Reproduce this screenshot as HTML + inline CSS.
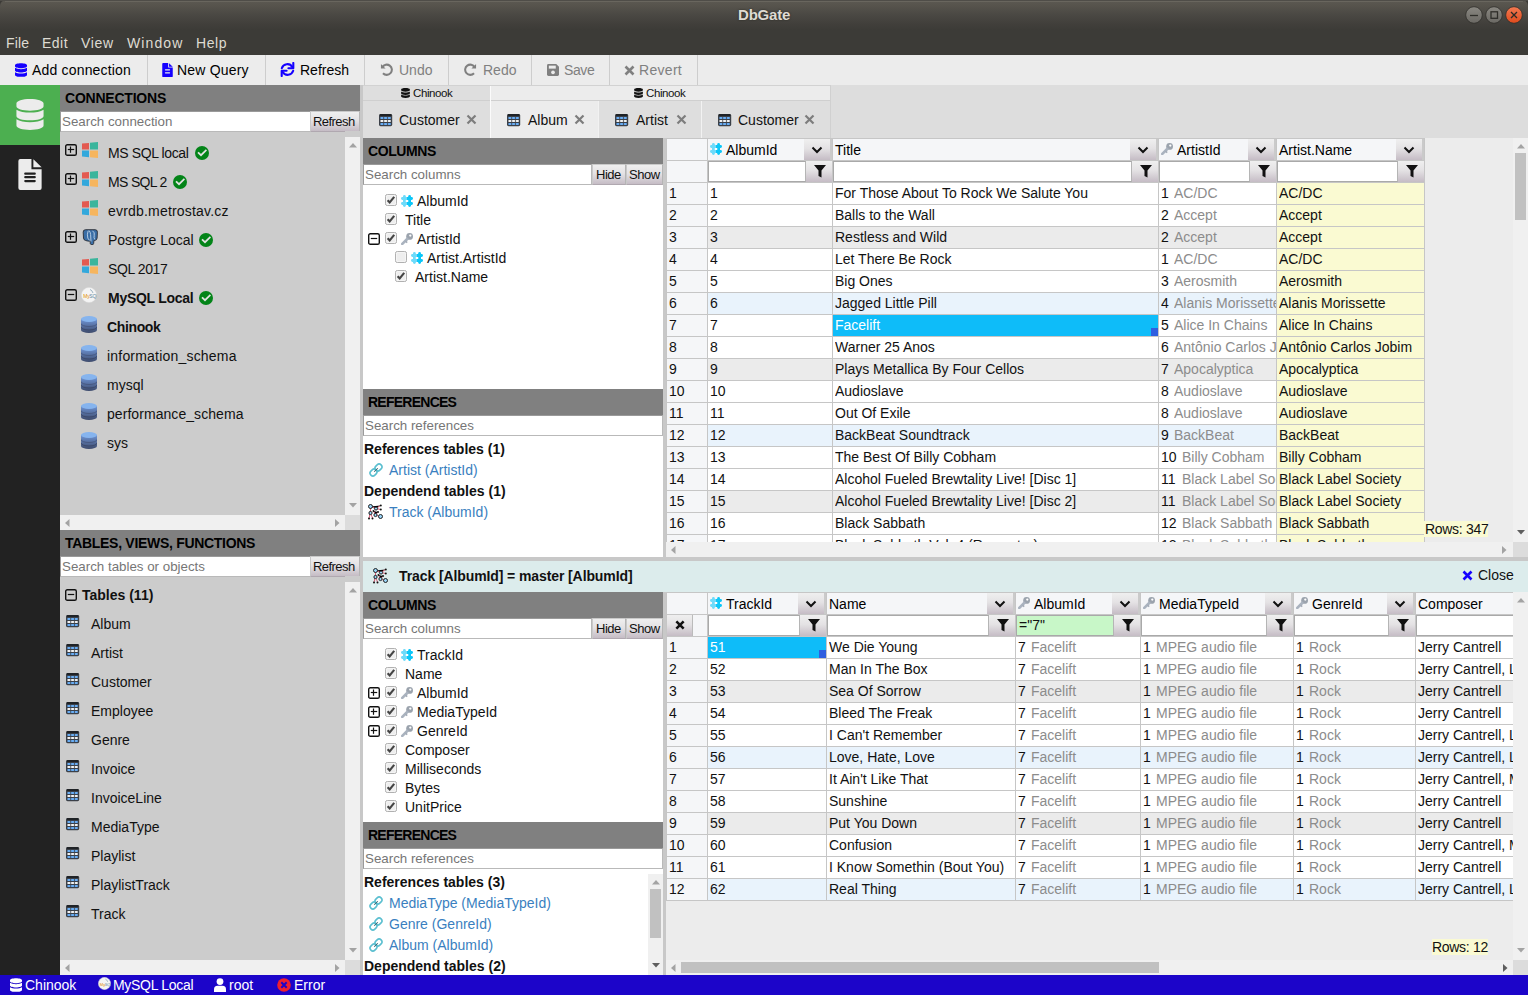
<!DOCTYPE html><html><head><meta charset="utf-8"><title>DbGate</title><style>*{margin:0;padding:0}
html,body{width:1528px;height:995px;overflow:hidden;background:#ececec;font-family:"Liberation Sans", sans-serif;}
.a{position:absolute;white-space:nowrap;}
svg.a{display:block}</style></head><body><div class="a" style="left:0px;top:0px;width:1528px;height:55px;background:#3c3b37;"></div><div class="a" style="left:0px;top:0px;width:1528px;height:31px;background:linear-gradient(#5c5952 0px,#56534c 6px,#4b4944 14px,#413f3b 24px,#3c3b37 30px);border-radius:6px 6px 0 0;"></div><div class="a" style="left:0px;top:0px;width:1528px;height:1px;background:#4f4d48;"></div><div class="a" style="left:5px;top:1px;width:1518px;height:1px;background:#69665e;"></div><div class="a" style="left:738px;top:6px;font-size:15px;line-height:17px;font-weight:bold;color:#dfdbd2;letter-spacing:-0.2px;text-shadow:0 0 2px #26251f;">DbGate</div><svg class="a" style="left:1465px;top:6px;" width="18" height="18" viewBox="0 0 18 18"><defs><linearGradient id="ggmin" x1="0" y1="0" x2="0" y2="1"><stop offset="0" stop-color="#8a8882"/><stop offset="1" stop-color="#6a6863"/></linearGradient></defs><circle cx="9" cy="9" r="8.3" fill="url(#ggmin)" stroke="#302f2b" stroke-width="0.8"/><path d="M5,9.5 H13" stroke="#2f2e2a" stroke-width="1.3"/></svg><svg class="a" style="left:1485px;top:6px;" width="18" height="18" viewBox="0 0 18 18"><defs><linearGradient id="ggmax" x1="0" y1="0" x2="0" y2="1"><stop offset="0" stop-color="#8a8882"/><stop offset="1" stop-color="#6a6863"/></linearGradient></defs><circle cx="9" cy="9" r="8.3" fill="url(#ggmax)" stroke="#302f2b" stroke-width="0.8"/><rect x="6" y="5.8" width="6.5" height="6.5" fill="none" stroke="#2f2e2a" stroke-width="1.3"/></svg><svg class="a" style="left:1505px;top:6px;" width="18" height="18" viewBox="0 0 18 18"><defs><linearGradient id="gc" x1="0" y1="0" x2="0" y2="1"><stop offset="0" stop-color="#f37a52"/><stop offset="1" stop-color="#df4a1c"/></linearGradient></defs><circle cx="9" cy="9" r="8.3" fill="url(#gc)" stroke="#302f2b" stroke-width="0.8"/><path d="M6,6 L12,12 M12,6 L6,12" stroke="#2b2a26" stroke-width="1.3"/></svg><div class="a" style="left:6px;top:35px;font-size:14px;line-height:16px;color:#dfdbd2;letter-spacing:0.2px;">File</div><div class="a" style="left:42px;top:35px;font-size:14px;line-height:16px;color:#dfdbd2;letter-spacing:0.5px;">Edit</div><div class="a" style="left:81px;top:35px;font-size:14px;line-height:16px;color:#dfdbd2;letter-spacing:0.7px;">View</div><div class="a" style="left:127px;top:35px;font-size:14px;line-height:16px;color:#dfdbd2;letter-spacing:1.1px;">Window</div><div class="a" style="left:196px;top:35px;font-size:14px;line-height:16px;color:#dfdbd2;letter-spacing:0.6px;">Help</div><div class="a" style="left:0px;top:55px;width:1528px;height:30px;background:#ececec;"></div><div class="a" style="left:147px;top:55px;width:1px;height:30px;background:#cdcdcd;"></div><div class="a" style="left:265px;top:55px;width:1px;height:30px;background:#cdcdcd;"></div><div class="a" style="left:364px;top:55px;width:1px;height:30px;background:#cdcdcd;"></div><div class="a" style="left:448px;top:55px;width:1px;height:30px;background:#cdcdcd;"></div><div class="a" style="left:531px;top:55px;width:1px;height:30px;background:#cdcdcd;"></div><div class="a" style="left:609px;top:55px;width:1px;height:30px;background:#cdcdcd;"></div><div class="a" style="left:697px;top:55px;width:1px;height:30px;background:#cdcdcd;"></div><svg class="a" style="left:15px;top:63px;overflow:visible" width="12" height="14" viewBox="0 0 448 512"><path fill="#1500ff" d="M448 73.143v45.714C448 159.143 347.667 192 224 192S0 159.143 0 118.857V73.143C0 32.857 100.333 0 224 0s224 32.857 224 73.143zM448 176v102.857C448 319.143 347.667 352 224 352S0 319.143 0 278.857V176c48.125 33.143 136.208 48.572 224 48.572S399.874 209.143 448 176zm0 160v102.857C448 479.143 347.667 512 224 512S0 479.143 0 438.857V336c48.125 33.143 136.208 48.572 224 48.572S399.874 369.143 448 336z"/></svg><div class="a" style="left:32px;top:62px;font-size:14px;line-height:16px;letter-spacing:0.18px;">Add connection</div><svg class="a" style="left:162px;top:63px;" width="11" height="14" viewBox="0 0 24 32"><path fill="#1500ff" d="M2,0 H13.5 V10.5 H24 V30 Q24,32 22,32 H2 Q0,32 0,30 V2 Q0,0 2,0 Z"/><path fill="#1500ff" d="M15.5,0.3 L24,8.5 H15.5 Z"/><rect x="6" y="14.5" width="12" height="2.8" rx="1.1" fill="#ececec"/><rect x="6" y="21" width="12" height="2.8" rx="1.1" fill="#ececec"/></svg><div class="a" style="left:177px;top:62px;font-size:14px;line-height:16px;letter-spacing:0.2px;">New Query</div><svg class="a" style="left:280px;top:62px;" width="15" height="15" viewBox="0 0 15 15"><path d="M1.8,6.2 A5.8,5.8 0 0 1 12.3,5" fill="none" stroke="#1500ff" stroke-width="2.1" stroke-linecap="round"/><path d="M13.3,1 V6.2 H8.4" fill="none" stroke="#1500ff" stroke-width="2.1" stroke-linecap="round" stroke-linejoin="round"/><path d="M13.2,8.8 A5.8,5.8 0 0 1 2.7,10" fill="none" stroke="#1500ff" stroke-width="2.1" stroke-linecap="round"/><path d="M1.7,14 V8.8 H6.6" fill="none" stroke="#1500ff" stroke-width="2.1" stroke-linecap="round" stroke-linejoin="round"/></svg><div class="a" style="left:300px;top:62px;font-size:14px;line-height:16px;">Refresh</div><svg class="a" style="left:380px;top:63px;" width="13" height="13" viewBox="0 0 14 14"><g><path d="M2.5,4.5 A5.5,5.5 0 1 1 3.2,11" fill="none" stroke="#808080" stroke-width="2.2"/><path d="M1,1 V6 H6 Z" fill="#808080"/></g></svg><div class="a" style="left:399px;top:62px;font-size:14px;line-height:16px;color:#808080;">Undo</div><svg class="a" style="left:464px;top:63px;" width="13" height="13" viewBox="0 0 14 14"><g transform="translate(14,0) scale(-1,1)"><path d="M2.5,4.5 A5.5,5.5 0 1 1 3.2,11" fill="none" stroke="#808080" stroke-width="2.2"/><path d="M1,1 V6 H6 Z" fill="#808080"/></g></svg><div class="a" style="left:483px;top:62px;font-size:14px;line-height:16px;color:#808080;">Redo</div><svg class="a" style="left:547px;top:64px;" width="12" height="12" viewBox="0 0 13 13"><path d="M0,1.5 Q0,0 1.5,0 H10 L13,3 V11.5 Q13,13 11.5,13 H1.5 Q0,13 0,11.5 Z" fill="#808080"/><rect x="2" y="1.8" width="7.5" height="3.2" fill="#ececec"/><circle cx="6.5" cy="9" r="2" fill="#ececec"/></svg><div class="a" style="left:564px;top:62px;font-size:14px;line-height:16px;color:#808080;letter-spacing:-0.4px;">Save</div><svg class="a" style="left:624px;top:65px;" width="11" height="11" viewBox="0 0 11 11"><path d="M1.5,1.5 L9.5,9.5 M9.5,1.5 L1.5,9.5" stroke="#808080" stroke-width="2.6" stroke-linecap="butt"/></svg><div class="a" style="left:639px;top:62px;font-size:14px;line-height:16px;color:#808080;letter-spacing:0.3px;">Revert</div><div class="a" style="left:0px;top:85px;width:60px;height:890px;background:#222222;"></div><div class="a" style="left:0px;top:85px;width:60px;height:60px;background:#4caf50;"></div><svg class="a" style="left:16px;top:99px;overflow:visible" width="28" height="31" viewBox="0 0 448 512"><path fill="#ececec" d="M448 73.143v45.714C448 159.143 347.667 192 224 192S0 159.143 0 118.857V73.143C0 32.857 100.333 0 224 0s224 32.857 224 73.143zM448 176v102.857C448 319.143 347.667 352 224 352S0 319.143 0 278.857V176c48.125 33.143 136.208 48.572 224 48.572S399.874 209.143 448 176zm0 160v102.857C448 479.143 347.667 512 224 512S0 479.143 0 438.857V336c48.125 33.143 136.208 48.572 224 48.572S399.874 369.143 448 336z"/></svg><svg class="a" style="left:18px;top:159px;" width="24" height="31" viewBox="0 0 24 32"><path fill="#ececec" d="M2,0 H13.5 V10.5 H24 V30 Q24,32 22,32 H2 Q0,32 0,30 V2 Q0,0 2,0 Z"/><path fill="#ececec" d="M15.5,0.3 L24,8.5 H15.5 Z"/><rect x="6" y="13.9" width="12" height="2.3" rx="1.1" fill="#222222"/><rect x="6" y="17.6" width="12" height="2.3" rx="1.1" fill="#222222"/><rect x="6" y="21.6" width="12" height="2.3" rx="1.1" fill="#222222"/></svg><div class="a" style="left:60px;top:85px;width:300px;height:890px;background:#cccccc;"></div><div class="a" style="left:60px;top:85px;width:300px;height:26px;background:#808080;"></div><div class="a" style="left:65px;top:90px;font-size:14px;line-height:16px;font-weight:bold;color:#000;letter-spacing:-0.22px;">CONNECTIONS</div><div class="a" style="left:60px;top:111px;width:251px;height:21px;background:#fff;box-sizing:border-box;border:1px solid #b9b9b9;border-top-color:#9a9a9a;border-left-color:#9a9a9a;"></div><div class="a" style="left:62px;top:114px;font-size:13.333px;line-height:15px;color:#767676;">Search connection</div><div class="a" style="left:310px;top:111px;width:50px;height:21px;background:linear-gradient(#efefef,#e4e2e4 45%,#c5bcc5);box-sizing:border-box;border:1px solid #c9c9c9;border-right-color:#b5b5b5;border-bottom-color:#b0a8b0;"></div><div class="a" style="left:313px;top:114px;font-size:13px;line-height:15px;color:#111;letter-spacing:-0.55px;">Refresh</div><div class="a" style="left:345px;top:131px;width:15px;height:6px;background:#cccccc;"></div><div class="a" style="left:345px;top:137px;width:15px;height:378px;background:#f0f0f0;"></div><svg class="a" style="left:348.5px;top:143px;" width="8" height="5" viewBox="0 0 8 5"><path d="M0,4.5 L4,0 L8,4.5 Z" fill="#a3a3a3"/></svg><svg class="a" style="left:348.5px;top:503px;" width="8" height="5" viewBox="0 0 8 5"><path d="M0,0 L8,0 L4,4.5 Z" fill="#a3a3a3"/></svg><div class="a" style="left:60px;top:515px;width:285px;height:15px;background:#f0f0f0;"></div><svg class="a" style="left:65px;top:518.5px;" width="5" height="8" viewBox="0 0 5 8"><path d="M4.5,0 V8 L0,4 Z" fill="#a3a3a3"/></svg><svg class="a" style="left:335px;top:518.5px;" width="5" height="8" viewBox="0 0 5 8"><path d="M0,0 V8 L4.5,4 Z" fill="#a3a3a3"/></svg><div class="a" style="left:345px;top:515px;width:15px;height:15px;background:#dcdcdc;"></div><svg class="a" style="left:65px;top:144px;" width="12" height="12" viewBox="0 0 12 12"><rect x="0.7" y="0.7" width="10.6" height="10.6" rx="1.6" fill="none" stroke="#111" stroke-width="1.4"/><path d="M2.8,5.5 H9.2" stroke="#111" stroke-width="1.2"/><path d="M5.5,2.5 V8.8" stroke="#111" stroke-width="1.2"/></svg><svg class="a" style="left:82px;top:142px;" width="16" height="16" viewBox="0 0 16 16"><path d="M0,1.6 L7,0.9 V7.6 H0 Z" fill="#e35a51"/><path d="M8,0.8 L16,0 V7.6 H8 Z" fill="#3ab59c"/><path d="M0,8.6 H7 V15.2 L0,14.5 Z" fill="#33a8dc"/><path d="M8,8.6 H16 V16 L8,15.3 Z" fill="#f6b55e"/></svg><div class="a" style="left:108px;top:145px;font-size:14px;line-height:16px;color:#111;letter-spacing:-0.38px;">MS SQL local</div><svg class="a" style="left:65px;top:173px;" width="12" height="12" viewBox="0 0 12 12"><rect x="0.7" y="0.7" width="10.6" height="10.6" rx="1.6" fill="none" stroke="#111" stroke-width="1.4"/><path d="M2.8,5.5 H9.2" stroke="#111" stroke-width="1.2"/><path d="M5.5,2.5 V8.8" stroke="#111" stroke-width="1.2"/></svg><svg class="a" style="left:82px;top:171px;" width="16" height="16" viewBox="0 0 16 16"><path d="M0,1.6 L7,0.9 V7.6 H0 Z" fill="#e35a51"/><path d="M8,0.8 L16,0 V7.6 H8 Z" fill="#3ab59c"/><path d="M0,8.6 H7 V15.2 L0,14.5 Z" fill="#33a8dc"/><path d="M8,8.6 H16 V16 L8,15.3 Z" fill="#f6b55e"/></svg><div class="a" style="left:108px;top:174px;font-size:14px;line-height:16px;color:#111;letter-spacing:-0.67px;">MS SQL 2</div><svg class="a" style="left:82px;top:200px;" width="16" height="16" viewBox="0 0 16 16"><path d="M0,1.6 L7,0.9 V7.6 H0 Z" fill="#e35a51"/><path d="M8,0.8 L16,0 V7.6 H8 Z" fill="#3ab59c"/><path d="M0,8.6 H7 V15.2 L0,14.5 Z" fill="#33a8dc"/><path d="M8,8.6 H16 V16 L8,15.3 Z" fill="#f6b55e"/></svg><div class="a" style="left:108px;top:203px;font-size:14px;line-height:16px;color:#111;letter-spacing:0.19px;">evrdb.metrostav.cz</div><svg class="a" style="left:65px;top:231px;" width="12" height="12" viewBox="0 0 12 12"><rect x="0.7" y="0.7" width="10.6" height="10.6" rx="1.6" fill="none" stroke="#111" stroke-width="1.4"/><path d="M2.8,5.5 H9.2" stroke="#111" stroke-width="1.2"/><path d="M5.5,2.5 V8.8" stroke="#111" stroke-width="1.2"/></svg><svg class="a" style="left:82px;top:228.5px;" width="16" height="16" viewBox="0 0 16 16"><path d="M1.2,3.2 Q1,0.8 3.5,0.7 H13.2 Q15.6,0.8 15.4,3.2 L15.1,9 Q15,11.2 12.8,11.4 L12,11.4 L11.6,14.6 Q11.3,16 10,15.8 L9,15.6 Q8.1,15.2 8.2,13.8 L8.3,12 Q6.8,12.3 5.2,11.9 L3.6,11.5 Q1.6,11 1.5,9 Z" fill="#3a6ea6" stroke="#2a2d33" stroke-width="0.9"/><path d="M6.2,1.8 Q4.8,5 5.8,9 Q6.5,11 7.8,11.2 M7,1.5 Q8.4,3 8.6,5.5 L9,12.5 M10.5,1.8 Q13,3.5 12.2,6.5 Q11.6,8.8 12.8,10.5" fill="none" stroke="#cfe0f0" stroke-width="0.8"/></svg><div class="a" style="left:108px;top:232px;font-size:14px;line-height:16px;color:#111;letter-spacing:0px;">Postgre Local</div><svg class="a" style="left:82px;top:258px;" width="16" height="16" viewBox="0 0 16 16"><path d="M0,1.6 L7,0.9 V7.6 H0 Z" fill="#e35a51"/><path d="M8,0.8 L16,0 V7.6 H8 Z" fill="#3ab59c"/><path d="M0,8.6 H7 V15.2 L0,14.5 Z" fill="#33a8dc"/><path d="M8,8.6 H16 V16 L8,15.3 Z" fill="#f6b55e"/></svg><div class="a" style="left:108px;top:261px;font-size:14px;line-height:16px;color:#111;letter-spacing:-0.39px;">SQL 2017</div><svg class="a" style="left:65px;top:289px;" width="12" height="12" viewBox="0 0 12 12"><rect x="0.7" y="0.7" width="10.6" height="10.6" rx="1.6" fill="none" stroke="#111" stroke-width="1.4"/><path d="M2.8,5.5 H9.2" stroke="#111" stroke-width="1.2"/></svg><svg class="a" style="left:81px;top:287px;" width="16" height="16" viewBox="0 0 16 16"><circle cx="8" cy="8" r="7.6" fill="#f4f4f4" stroke="#ddd" stroke-width="0.5"/><text x="2.2" y="10.5" font-size="5" font-family="Liberation Sans" fill="#e48e00">My</text><text x="8.2" y="10.5" font-size="5" font-family="Liberation Sans" fill="#5d87a1">SQL</text><path d="M9,2.5 Q11,3 12,6" stroke="#5d87a1" stroke-width="0.6" fill="none"/></svg><div class="a" style="left:108px;top:290px;font-size:14px;line-height:16px;font-weight:bold;color:#111;letter-spacing:-0.28px;">MySQL Local</div><svg class="a" style="left:195px;top:146px;" width="14" height="14" viewBox="0 0 14 14"><circle cx="7" cy="7" r="7" fill="#038418"/><path d="M3.6,6.9 L6,9.2 L10.8,4.5" fill="none" stroke="#e2e2e2" stroke-width="1.7" stroke-linecap="square"/></svg><svg class="a" style="left:173px;top:175px;" width="14" height="14" viewBox="0 0 14 14"><circle cx="7" cy="7" r="7" fill="#038418"/><path d="M3.6,6.9 L6,9.2 L10.8,4.5" fill="none" stroke="#e2e2e2" stroke-width="1.7" stroke-linecap="square"/></svg><svg class="a" style="left:199px;top:233px;" width="14" height="14" viewBox="0 0 14 14"><circle cx="7" cy="7" r="7" fill="#038418"/><path d="M3.6,6.9 L6,9.2 L10.8,4.5" fill="none" stroke="#e2e2e2" stroke-width="1.7" stroke-linecap="square"/></svg><svg class="a" style="left:199px;top:291px;" width="14" height="14" viewBox="0 0 14 14"><circle cx="7" cy="7" r="7" fill="#038418"/><path d="M3.6,6.9 L6,9.2 L10.8,4.5" fill="none" stroke="#e2e2e2" stroke-width="1.7" stroke-linecap="square"/></svg><svg class="a" style="left:81px;top:316px;" width="16" height="17" viewBox="0 0 16 17"><defs><linearGradient id="cg" x1="0" y1="0" x2="0" y2="1"><stop offset="0" stop-color="#6f95d6"/><stop offset="1" stop-color="#3d4a6b"/></linearGradient></defs><path d="M0,3 V14 A8,3 0 0 0 16,14 V3 Z" fill="url(#cg)"/><path d="M0,7.5 A8,3 0 0 0 16,7.5" fill="none" stroke="#3f4d70" stroke-width="0.9" opacity="0.7"/><path d="M0,11 A8,3 0 0 0 16,11" fill="none" stroke="#333d59" stroke-width="0.9" opacity="0.7"/><ellipse cx="8" cy="3" rx="8" ry="3" fill="#86b4ee"/></svg><div class="a" style="left:107px;top:319px;font-size:14px;line-height:16px;font-weight:bold;color:#111;letter-spacing:-0.36px;">Chinook</div><svg class="a" style="left:81px;top:345px;" width="16" height="17" viewBox="0 0 16 17"><defs><linearGradient id="cg" x1="0" y1="0" x2="0" y2="1"><stop offset="0" stop-color="#6f95d6"/><stop offset="1" stop-color="#3d4a6b"/></linearGradient></defs><path d="M0,3 V14 A8,3 0 0 0 16,14 V3 Z" fill="url(#cg)"/><path d="M0,7.5 A8,3 0 0 0 16,7.5" fill="none" stroke="#3f4d70" stroke-width="0.9" opacity="0.7"/><path d="M0,11 A8,3 0 0 0 16,11" fill="none" stroke="#333d59" stroke-width="0.9" opacity="0.7"/><ellipse cx="8" cy="3" rx="8" ry="3" fill="#86b4ee"/></svg><div class="a" style="left:107px;top:348px;font-size:14px;line-height:16px;color:#111;letter-spacing:0.2px;">information_schema</div><svg class="a" style="left:81px;top:374px;" width="16" height="17" viewBox="0 0 16 17"><defs><linearGradient id="cg" x1="0" y1="0" x2="0" y2="1"><stop offset="0" stop-color="#6f95d6"/><stop offset="1" stop-color="#3d4a6b"/></linearGradient></defs><path d="M0,3 V14 A8,3 0 0 0 16,14 V3 Z" fill="url(#cg)"/><path d="M0,7.5 A8,3 0 0 0 16,7.5" fill="none" stroke="#3f4d70" stroke-width="0.9" opacity="0.7"/><path d="M0,11 A8,3 0 0 0 16,11" fill="none" stroke="#333d59" stroke-width="0.9" opacity="0.7"/><ellipse cx="8" cy="3" rx="8" ry="3" fill="#86b4ee"/></svg><div class="a" style="left:107px;top:377px;font-size:14px;line-height:16px;color:#111;letter-spacing:0px;">mysql</div><svg class="a" style="left:81px;top:403px;" width="16" height="17" viewBox="0 0 16 17"><defs><linearGradient id="cg" x1="0" y1="0" x2="0" y2="1"><stop offset="0" stop-color="#6f95d6"/><stop offset="1" stop-color="#3d4a6b"/></linearGradient></defs><path d="M0,3 V14 A8,3 0 0 0 16,14 V3 Z" fill="url(#cg)"/><path d="M0,7.5 A8,3 0 0 0 16,7.5" fill="none" stroke="#3f4d70" stroke-width="0.9" opacity="0.7"/><path d="M0,11 A8,3 0 0 0 16,11" fill="none" stroke="#333d59" stroke-width="0.9" opacity="0.7"/><ellipse cx="8" cy="3" rx="8" ry="3" fill="#86b4ee"/></svg><div class="a" style="left:107px;top:406px;font-size:14px;line-height:16px;color:#111;letter-spacing:0.06px;">performance_schema</div><svg class="a" style="left:81px;top:432px;" width="16" height="17" viewBox="0 0 16 17"><defs><linearGradient id="cg" x1="0" y1="0" x2="0" y2="1"><stop offset="0" stop-color="#6f95d6"/><stop offset="1" stop-color="#3d4a6b"/></linearGradient></defs><path d="M0,3 V14 A8,3 0 0 0 16,14 V3 Z" fill="url(#cg)"/><path d="M0,7.5 A8,3 0 0 0 16,7.5" fill="none" stroke="#3f4d70" stroke-width="0.9" opacity="0.7"/><path d="M0,11 A8,3 0 0 0 16,11" fill="none" stroke="#333d59" stroke-width="0.9" opacity="0.7"/><ellipse cx="8" cy="3" rx="8" ry="3" fill="#86b4ee"/></svg><div class="a" style="left:107px;top:435px;font-size:14px;line-height:16px;color:#111;letter-spacing:0px;">sys</div><div class="a" style="left:60px;top:530px;width:300px;height:26px;background:#808080;"></div><div class="a" style="left:65px;top:535px;font-size:14px;line-height:16px;font-weight:bold;color:#000;letter-spacing:-0.3px;">TABLES, VIEWS, FUNCTIONS</div><div class="a" style="left:60px;top:556px;width:251px;height:21px;background:#fff;box-sizing:border-box;border:1px solid #b9b9b9;border-top-color:#9a9a9a;border-left-color:#9a9a9a;"></div><div class="a" style="left:62px;top:559px;font-size:13.333px;line-height:15px;color:#767676;">Search tables or objects</div><div class="a" style="left:310px;top:556px;width:50px;height:21px;background:linear-gradient(#efefef,#e4e2e4 45%,#c5bcc5);box-sizing:border-box;border:1px solid #c9c9c9;border-right-color:#b5b5b5;border-bottom-color:#b0a8b0;"></div><div class="a" style="left:313px;top:559px;font-size:13px;line-height:15px;color:#111;letter-spacing:-0.55px;">Refresh</div><div class="a" style="left:345px;top:582px;width:15px;height:378px;background:#f0f0f0;"></div><svg class="a" style="left:348.5px;top:588px;" width="8" height="5" viewBox="0 0 8 5"><path d="M0,4.5 L4,0 L8,4.5 Z" fill="#a3a3a3"/></svg><svg class="a" style="left:348.5px;top:948px;" width="8" height="5" viewBox="0 0 8 5"><path d="M0,0 L8,0 L4,4.5 Z" fill="#a3a3a3"/></svg><div class="a" style="left:345px;top:576px;width:15px;height:6px;background:#cccccc;"></div><div class="a" style="left:60px;top:960px;width:285px;height:15px;background:#f0f0f0;"></div><svg class="a" style="left:65px;top:963.5px;" width="5" height="8" viewBox="0 0 5 8"><path d="M4.5,0 V8 L0,4 Z" fill="#a3a3a3"/></svg><svg class="a" style="left:335px;top:963.5px;" width="5" height="8" viewBox="0 0 5 8"><path d="M0,0 V8 L4.5,4 Z" fill="#a3a3a3"/></svg><div class="a" style="left:345px;top:960px;width:15px;height:15px;background:#dcdcdc;"></div><svg class="a" style="left:65px;top:589px;" width="12" height="12" viewBox="0 0 12 12"><rect x="0.7" y="0.7" width="10.6" height="10.6" rx="1.6" fill="none" stroke="#111" stroke-width="1.4"/><path d="M2.8,5.5 H9.2" stroke="#111" stroke-width="1.2"/></svg><div class="a" style="left:82px;top:587px;font-size:14px;line-height:16px;font-weight:bold;color:#111;">Tables (11)</div><svg class="a" style="left:66px;top:615px;" width="14" height="13" viewBox="0 0 14 13"><rect x="0" y="0" width="13.2" height="12.2" rx="1.6" fill="#3b4048"/><rect x="0.6" y="0" width="12" height="2" rx="1" fill="#1f2226"/><rect x="1.3" y="3.0" width="3.2" height="2.1" rx="0.8" fill="#69aef6"/><rect x="5.0" y="3.0" width="3.2" height="2.1" rx="0.8" fill="#69aef6"/><rect x="8.7" y="3.0" width="3.2" height="2.1" rx="0.8" fill="#69aef6"/><rect x="1.3" y="6.0" width="3.2" height="2.1" rx="0.8" fill="#f2f2f2"/><rect x="5.0" y="6.0" width="3.2" height="2.1" rx="0.8" fill="#f2f2f2"/><rect x="8.7" y="6.0" width="3.2" height="2.1" rx="0.8" fill="#f2f2f2"/><rect x="1.3" y="9.0" width="3.2" height="2.1" rx="0.8" fill="#69aef6"/><rect x="5.0" y="9.0" width="3.2" height="2.1" rx="0.8" fill="#69aef6"/><rect x="8.7" y="9.0" width="3.2" height="2.1" rx="0.8" fill="#69aef6"/></svg><div class="a" style="left:91px;top:616px;font-size:14px;line-height:16px;color:#111;">Album</div><svg class="a" style="left:66px;top:644px;" width="14" height="13" viewBox="0 0 14 13"><rect x="0" y="0" width="13.2" height="12.2" rx="1.6" fill="#3b4048"/><rect x="0.6" y="0" width="12" height="2" rx="1" fill="#1f2226"/><rect x="1.3" y="3.0" width="3.2" height="2.1" rx="0.8" fill="#69aef6"/><rect x="5.0" y="3.0" width="3.2" height="2.1" rx="0.8" fill="#69aef6"/><rect x="8.7" y="3.0" width="3.2" height="2.1" rx="0.8" fill="#69aef6"/><rect x="1.3" y="6.0" width="3.2" height="2.1" rx="0.8" fill="#f2f2f2"/><rect x="5.0" y="6.0" width="3.2" height="2.1" rx="0.8" fill="#f2f2f2"/><rect x="8.7" y="6.0" width="3.2" height="2.1" rx="0.8" fill="#f2f2f2"/><rect x="1.3" y="9.0" width="3.2" height="2.1" rx="0.8" fill="#69aef6"/><rect x="5.0" y="9.0" width="3.2" height="2.1" rx="0.8" fill="#69aef6"/><rect x="8.7" y="9.0" width="3.2" height="2.1" rx="0.8" fill="#69aef6"/></svg><div class="a" style="left:91px;top:645px;font-size:14px;line-height:16px;color:#111;">Artist</div><svg class="a" style="left:66px;top:673px;" width="14" height="13" viewBox="0 0 14 13"><rect x="0" y="0" width="13.2" height="12.2" rx="1.6" fill="#3b4048"/><rect x="0.6" y="0" width="12" height="2" rx="1" fill="#1f2226"/><rect x="1.3" y="3.0" width="3.2" height="2.1" rx="0.8" fill="#69aef6"/><rect x="5.0" y="3.0" width="3.2" height="2.1" rx="0.8" fill="#69aef6"/><rect x="8.7" y="3.0" width="3.2" height="2.1" rx="0.8" fill="#69aef6"/><rect x="1.3" y="6.0" width="3.2" height="2.1" rx="0.8" fill="#f2f2f2"/><rect x="5.0" y="6.0" width="3.2" height="2.1" rx="0.8" fill="#f2f2f2"/><rect x="8.7" y="6.0" width="3.2" height="2.1" rx="0.8" fill="#f2f2f2"/><rect x="1.3" y="9.0" width="3.2" height="2.1" rx="0.8" fill="#69aef6"/><rect x="5.0" y="9.0" width="3.2" height="2.1" rx="0.8" fill="#69aef6"/><rect x="8.7" y="9.0" width="3.2" height="2.1" rx="0.8" fill="#69aef6"/></svg><div class="a" style="left:91px;top:674px;font-size:14px;line-height:16px;color:#111;">Customer</div><svg class="a" style="left:66px;top:702px;" width="14" height="13" viewBox="0 0 14 13"><rect x="0" y="0" width="13.2" height="12.2" rx="1.6" fill="#3b4048"/><rect x="0.6" y="0" width="12" height="2" rx="1" fill="#1f2226"/><rect x="1.3" y="3.0" width="3.2" height="2.1" rx="0.8" fill="#69aef6"/><rect x="5.0" y="3.0" width="3.2" height="2.1" rx="0.8" fill="#69aef6"/><rect x="8.7" y="3.0" width="3.2" height="2.1" rx="0.8" fill="#69aef6"/><rect x="1.3" y="6.0" width="3.2" height="2.1" rx="0.8" fill="#f2f2f2"/><rect x="5.0" y="6.0" width="3.2" height="2.1" rx="0.8" fill="#f2f2f2"/><rect x="8.7" y="6.0" width="3.2" height="2.1" rx="0.8" fill="#f2f2f2"/><rect x="1.3" y="9.0" width="3.2" height="2.1" rx="0.8" fill="#69aef6"/><rect x="5.0" y="9.0" width="3.2" height="2.1" rx="0.8" fill="#69aef6"/><rect x="8.7" y="9.0" width="3.2" height="2.1" rx="0.8" fill="#69aef6"/></svg><div class="a" style="left:91px;top:703px;font-size:14px;line-height:16px;color:#111;">Employee</div><svg class="a" style="left:66px;top:731px;" width="14" height="13" viewBox="0 0 14 13"><rect x="0" y="0" width="13.2" height="12.2" rx="1.6" fill="#3b4048"/><rect x="0.6" y="0" width="12" height="2" rx="1" fill="#1f2226"/><rect x="1.3" y="3.0" width="3.2" height="2.1" rx="0.8" fill="#69aef6"/><rect x="5.0" y="3.0" width="3.2" height="2.1" rx="0.8" fill="#69aef6"/><rect x="8.7" y="3.0" width="3.2" height="2.1" rx="0.8" fill="#69aef6"/><rect x="1.3" y="6.0" width="3.2" height="2.1" rx="0.8" fill="#f2f2f2"/><rect x="5.0" y="6.0" width="3.2" height="2.1" rx="0.8" fill="#f2f2f2"/><rect x="8.7" y="6.0" width="3.2" height="2.1" rx="0.8" fill="#f2f2f2"/><rect x="1.3" y="9.0" width="3.2" height="2.1" rx="0.8" fill="#69aef6"/><rect x="5.0" y="9.0" width="3.2" height="2.1" rx="0.8" fill="#69aef6"/><rect x="8.7" y="9.0" width="3.2" height="2.1" rx="0.8" fill="#69aef6"/></svg><div class="a" style="left:91px;top:732px;font-size:14px;line-height:16px;color:#111;">Genre</div><svg class="a" style="left:66px;top:760px;" width="14" height="13" viewBox="0 0 14 13"><rect x="0" y="0" width="13.2" height="12.2" rx="1.6" fill="#3b4048"/><rect x="0.6" y="0" width="12" height="2" rx="1" fill="#1f2226"/><rect x="1.3" y="3.0" width="3.2" height="2.1" rx="0.8" fill="#69aef6"/><rect x="5.0" y="3.0" width="3.2" height="2.1" rx="0.8" fill="#69aef6"/><rect x="8.7" y="3.0" width="3.2" height="2.1" rx="0.8" fill="#69aef6"/><rect x="1.3" y="6.0" width="3.2" height="2.1" rx="0.8" fill="#f2f2f2"/><rect x="5.0" y="6.0" width="3.2" height="2.1" rx="0.8" fill="#f2f2f2"/><rect x="8.7" y="6.0" width="3.2" height="2.1" rx="0.8" fill="#f2f2f2"/><rect x="1.3" y="9.0" width="3.2" height="2.1" rx="0.8" fill="#69aef6"/><rect x="5.0" y="9.0" width="3.2" height="2.1" rx="0.8" fill="#69aef6"/><rect x="8.7" y="9.0" width="3.2" height="2.1" rx="0.8" fill="#69aef6"/></svg><div class="a" style="left:91px;top:761px;font-size:14px;line-height:16px;color:#111;">Invoice</div><svg class="a" style="left:66px;top:789px;" width="14" height="13" viewBox="0 0 14 13"><rect x="0" y="0" width="13.2" height="12.2" rx="1.6" fill="#3b4048"/><rect x="0.6" y="0" width="12" height="2" rx="1" fill="#1f2226"/><rect x="1.3" y="3.0" width="3.2" height="2.1" rx="0.8" fill="#69aef6"/><rect x="5.0" y="3.0" width="3.2" height="2.1" rx="0.8" fill="#69aef6"/><rect x="8.7" y="3.0" width="3.2" height="2.1" rx="0.8" fill="#69aef6"/><rect x="1.3" y="6.0" width="3.2" height="2.1" rx="0.8" fill="#f2f2f2"/><rect x="5.0" y="6.0" width="3.2" height="2.1" rx="0.8" fill="#f2f2f2"/><rect x="8.7" y="6.0" width="3.2" height="2.1" rx="0.8" fill="#f2f2f2"/><rect x="1.3" y="9.0" width="3.2" height="2.1" rx="0.8" fill="#69aef6"/><rect x="5.0" y="9.0" width="3.2" height="2.1" rx="0.8" fill="#69aef6"/><rect x="8.7" y="9.0" width="3.2" height="2.1" rx="0.8" fill="#69aef6"/></svg><div class="a" style="left:91px;top:790px;font-size:14px;line-height:16px;color:#111;">InvoiceLine</div><svg class="a" style="left:66px;top:818px;" width="14" height="13" viewBox="0 0 14 13"><rect x="0" y="0" width="13.2" height="12.2" rx="1.6" fill="#3b4048"/><rect x="0.6" y="0" width="12" height="2" rx="1" fill="#1f2226"/><rect x="1.3" y="3.0" width="3.2" height="2.1" rx="0.8" fill="#69aef6"/><rect x="5.0" y="3.0" width="3.2" height="2.1" rx="0.8" fill="#69aef6"/><rect x="8.7" y="3.0" width="3.2" height="2.1" rx="0.8" fill="#69aef6"/><rect x="1.3" y="6.0" width="3.2" height="2.1" rx="0.8" fill="#f2f2f2"/><rect x="5.0" y="6.0" width="3.2" height="2.1" rx="0.8" fill="#f2f2f2"/><rect x="8.7" y="6.0" width="3.2" height="2.1" rx="0.8" fill="#f2f2f2"/><rect x="1.3" y="9.0" width="3.2" height="2.1" rx="0.8" fill="#69aef6"/><rect x="5.0" y="9.0" width="3.2" height="2.1" rx="0.8" fill="#69aef6"/><rect x="8.7" y="9.0" width="3.2" height="2.1" rx="0.8" fill="#69aef6"/></svg><div class="a" style="left:91px;top:819px;font-size:14px;line-height:16px;color:#111;">MediaType</div><svg class="a" style="left:66px;top:847px;" width="14" height="13" viewBox="0 0 14 13"><rect x="0" y="0" width="13.2" height="12.2" rx="1.6" fill="#3b4048"/><rect x="0.6" y="0" width="12" height="2" rx="1" fill="#1f2226"/><rect x="1.3" y="3.0" width="3.2" height="2.1" rx="0.8" fill="#69aef6"/><rect x="5.0" y="3.0" width="3.2" height="2.1" rx="0.8" fill="#69aef6"/><rect x="8.7" y="3.0" width="3.2" height="2.1" rx="0.8" fill="#69aef6"/><rect x="1.3" y="6.0" width="3.2" height="2.1" rx="0.8" fill="#f2f2f2"/><rect x="5.0" y="6.0" width="3.2" height="2.1" rx="0.8" fill="#f2f2f2"/><rect x="8.7" y="6.0" width="3.2" height="2.1" rx="0.8" fill="#f2f2f2"/><rect x="1.3" y="9.0" width="3.2" height="2.1" rx="0.8" fill="#69aef6"/><rect x="5.0" y="9.0" width="3.2" height="2.1" rx="0.8" fill="#69aef6"/><rect x="8.7" y="9.0" width="3.2" height="2.1" rx="0.8" fill="#69aef6"/></svg><div class="a" style="left:91px;top:848px;font-size:14px;line-height:16px;color:#111;">Playlist</div><svg class="a" style="left:66px;top:876px;" width="14" height="13" viewBox="0 0 14 13"><rect x="0" y="0" width="13.2" height="12.2" rx="1.6" fill="#3b4048"/><rect x="0.6" y="0" width="12" height="2" rx="1" fill="#1f2226"/><rect x="1.3" y="3.0" width="3.2" height="2.1" rx="0.8" fill="#69aef6"/><rect x="5.0" y="3.0" width="3.2" height="2.1" rx="0.8" fill="#69aef6"/><rect x="8.7" y="3.0" width="3.2" height="2.1" rx="0.8" fill="#69aef6"/><rect x="1.3" y="6.0" width="3.2" height="2.1" rx="0.8" fill="#f2f2f2"/><rect x="5.0" y="6.0" width="3.2" height="2.1" rx="0.8" fill="#f2f2f2"/><rect x="8.7" y="6.0" width="3.2" height="2.1" rx="0.8" fill="#f2f2f2"/><rect x="1.3" y="9.0" width="3.2" height="2.1" rx="0.8" fill="#69aef6"/><rect x="5.0" y="9.0" width="3.2" height="2.1" rx="0.8" fill="#69aef6"/><rect x="8.7" y="9.0" width="3.2" height="2.1" rx="0.8" fill="#69aef6"/></svg><div class="a" style="left:91px;top:877px;font-size:14px;line-height:16px;color:#111;">PlaylistTrack</div><svg class="a" style="left:66px;top:905px;" width="14" height="13" viewBox="0 0 14 13"><rect x="0" y="0" width="13.2" height="12.2" rx="1.6" fill="#3b4048"/><rect x="0.6" y="0" width="12" height="2" rx="1" fill="#1f2226"/><rect x="1.3" y="3.0" width="3.2" height="2.1" rx="0.8" fill="#69aef6"/><rect x="5.0" y="3.0" width="3.2" height="2.1" rx="0.8" fill="#69aef6"/><rect x="8.7" y="3.0" width="3.2" height="2.1" rx="0.8" fill="#69aef6"/><rect x="1.3" y="6.0" width="3.2" height="2.1" rx="0.8" fill="#f2f2f2"/><rect x="5.0" y="6.0" width="3.2" height="2.1" rx="0.8" fill="#f2f2f2"/><rect x="8.7" y="6.0" width="3.2" height="2.1" rx="0.8" fill="#f2f2f2"/><rect x="1.3" y="9.0" width="3.2" height="2.1" rx="0.8" fill="#69aef6"/><rect x="5.0" y="9.0" width="3.2" height="2.1" rx="0.8" fill="#69aef6"/><rect x="8.7" y="9.0" width="3.2" height="2.1" rx="0.8" fill="#69aef6"/></svg><div class="a" style="left:91px;top:906px;font-size:14px;line-height:16px;color:#111;">Track</div><div class="a" style="left:360px;top:85px;width:3px;height:890px;background:#c8c8c8;"></div><div class="a" style="left:0px;top:975px;width:1528px;height:20px;background:#1c05c9;"></div><svg class="a" style="left:10px;top:978px;overflow:visible" width="12" height="14" viewBox="0 0 448 512"><path fill="#ffffff" d="M448 73.143v45.714C448 159.143 347.667 192 224 192S0 159.143 0 118.857V73.143C0 32.857 100.333 0 224 0s224 32.857 224 73.143zM448 176v102.857C448 319.143 347.667 352 224 352S0 319.143 0 278.857V176c48.125 33.143 136.208 48.572 224 48.572S399.874 209.143 448 176zm0 160v102.857C448 479.143 347.667 512 224 512S0 479.143 0 438.857V336c48.125 33.143 136.208 48.572 224 48.572S399.874 369.143 448 336z"/></svg><div class="a" style="left:25px;top:977px;font-size:14px;line-height:16px;color:#fff;">Chinook</div><svg class="a" style="left:98px;top:977px;" width="13" height="13" viewBox="0 0 16 16"><circle cx="8" cy="8" r="7.6" fill="#f4f4f4" stroke="#ddd" stroke-width="0.5"/><text x="2.2" y="10.5" font-size="5" font-family="Liberation Sans" fill="#e48e00">My</text><text x="8.2" y="10.5" font-size="5" font-family="Liberation Sans" fill="#5d87a1">SQL</text><path d="M9,2.5 Q11,3 12,6" stroke="#5d87a1" stroke-width="0.6" fill="none"/></svg><div class="a" style="left:113px;top:977px;font-size:14px;line-height:16px;color:#fff;letter-spacing:-0.3px;">MySQL Local</div><svg class="a" style="left:214px;top:978px;" width="12" height="14" viewBox="0 0 12 14"><circle cx="6" cy="3.6" r="3.4" fill="#fff"/><path d="M0,14 V11.5 Q0,7.8 3.5,7.8 H8.5 Q12,7.8 12,11.5 V14 Z" fill="#fff"/></svg><div class="a" style="left:229px;top:977px;font-size:14px;line-height:16px;color:#fff;">root</div><svg class="a" style="left:277px;top:978px;" width="14" height="14" viewBox="0 0 14 14"><circle cx="7" cy="7" r="6.8" fill="#ee1f2f"/><path d="M4.3,4.3 L9.7,9.7 M9.7,4.3 L4.3,9.7" stroke="#1c05c9" stroke-width="2"/></svg><div class="a" style="left:294px;top:977px;font-size:14px;line-height:16px;color:#fff;">Error</div><div class="a" style="left:363px;top:85px;width:1165px;height:53px;background:#dddddd;"></div><div class="a" style="left:363px;top:85px;width:467px;height:1px;background:#d2d2d2;"></div><div class="a" style="left:363px;top:86px;width:127px;height:14px;background:#dedede;"></div><div class="a" style="left:490px;top:86px;width:340px;height:14px;background:#ececec;"></div><div class="a" style="left:363px;top:100px;width:467px;height:1px;background:#cfcfcf;"></div><div class="a" style="left:490px;top:86px;width:1px;height:52px;background:#fbfbfb;"></div><div class="a" style="left:830px;top:85px;width:1px;height:53px;background:#d0d0d0;"></div><div class="a" style="left:363px;top:101px;width:127px;height:37px;background:#dedede;"></div><div class="a" style="left:491px;top:101px;width:107px;height:37px;background:#ececec;"></div><div class="a" style="left:598px;top:101px;width:1px;height:37px;background:#f2f2f2;"></div><div class="a" style="left:599px;top:101px;width:102px;height:37px;background:#dedede;"></div><div class="a" style="left:701px;top:101px;width:1px;height:37px;background:#f2f2f2;"></div><div class="a" style="left:702px;top:101px;width:128px;height:37px;background:#dedede;"></div><svg class="a" style="left:401px;top:88px;overflow:visible" width="9" height="10" viewBox="0 0 448 512"><path fill="#111" d="M448 73.143v45.714C448 159.143 347.667 192 224 192S0 159.143 0 118.857V73.143C0 32.857 100.333 0 224 0s224 32.857 224 73.143zM448 176v102.857C448 319.143 347.667 352 224 352S0 319.143 0 278.857V176c48.125 33.143 136.208 48.572 224 48.572S399.874 209.143 448 176zm0 160v102.857C448 479.143 347.667 512 224 512S0 479.143 0 438.857V336c48.125 33.143 136.208 48.572 224 48.572S399.874 369.143 448 336z"/></svg><div class="a" style="left:413px;top:87px;font-size:11.5px;line-height:12px;color:#111;letter-spacing:-0.4px;">Chinook</div><svg class="a" style="left:634px;top:88px;overflow:visible" width="9" height="10" viewBox="0 0 448 512"><path fill="#111" d="M448 73.143v45.714C448 159.143 347.667 192 224 192S0 159.143 0 118.857V73.143C0 32.857 100.333 0 224 0s224 32.857 224 73.143zM448 176v102.857C448 319.143 347.667 352 224 352S0 319.143 0 278.857V176c48.125 33.143 136.208 48.572 224 48.572S399.874 209.143 448 176zm0 160v102.857C448 479.143 347.667 512 224 512S0 479.143 0 438.857V336c48.125 33.143 136.208 48.572 224 48.572S399.874 369.143 448 336z"/></svg><div class="a" style="left:646px;top:87px;font-size:11.5px;line-height:12px;color:#111;letter-spacing:-0.4px;">Chinook</div><svg class="a" style="left:379px;top:114px;" width="14" height="13" viewBox="0 0 14 13"><rect x="0" y="0" width="13.2" height="12.2" rx="1.6" fill="#3b4048"/><rect x="0.6" y="0" width="12" height="2" rx="1" fill="#1f2226"/><rect x="1.3" y="3.0" width="3.2" height="2.1" rx="0.8" fill="#69aef6"/><rect x="5.0" y="3.0" width="3.2" height="2.1" rx="0.8" fill="#69aef6"/><rect x="8.7" y="3.0" width="3.2" height="2.1" rx="0.8" fill="#69aef6"/><rect x="1.3" y="6.0" width="3.2" height="2.1" rx="0.8" fill="#f2f2f2"/><rect x="5.0" y="6.0" width="3.2" height="2.1" rx="0.8" fill="#f2f2f2"/><rect x="8.7" y="6.0" width="3.2" height="2.1" rx="0.8" fill="#f2f2f2"/><rect x="1.3" y="9.0" width="3.2" height="2.1" rx="0.8" fill="#69aef6"/><rect x="5.0" y="9.0" width="3.2" height="2.1" rx="0.8" fill="#69aef6"/><rect x="8.7" y="9.0" width="3.2" height="2.1" rx="0.8" fill="#69aef6"/></svg><div class="a" style="left:399px;top:112px;font-size:14px;line-height:16px;color:#111;">Customer</div><svg class="a" style="left:466px;top:114px;" width="11" height="11" viewBox="0 0 11 11"><path d="M1.5,1.5 L9.5,9.5 M9.5,1.5 L1.5,9.5" stroke="#7d7d7d" stroke-width="2.2" stroke-linecap="butt"/></svg><svg class="a" style="left:507px;top:114px;" width="14" height="13" viewBox="0 0 14 13"><rect x="0" y="0" width="13.2" height="12.2" rx="1.6" fill="#3b4048"/><rect x="0.6" y="0" width="12" height="2" rx="1" fill="#1f2226"/><rect x="1.3" y="3.0" width="3.2" height="2.1" rx="0.8" fill="#69aef6"/><rect x="5.0" y="3.0" width="3.2" height="2.1" rx="0.8" fill="#69aef6"/><rect x="8.7" y="3.0" width="3.2" height="2.1" rx="0.8" fill="#69aef6"/><rect x="1.3" y="6.0" width="3.2" height="2.1" rx="0.8" fill="#f2f2f2"/><rect x="5.0" y="6.0" width="3.2" height="2.1" rx="0.8" fill="#f2f2f2"/><rect x="8.7" y="6.0" width="3.2" height="2.1" rx="0.8" fill="#f2f2f2"/><rect x="1.3" y="9.0" width="3.2" height="2.1" rx="0.8" fill="#69aef6"/><rect x="5.0" y="9.0" width="3.2" height="2.1" rx="0.8" fill="#69aef6"/><rect x="8.7" y="9.0" width="3.2" height="2.1" rx="0.8" fill="#69aef6"/></svg><div class="a" style="left:528px;top:112px;font-size:14px;line-height:16px;color:#111;">Album</div><svg class="a" style="left:574px;top:114px;" width="11" height="11" viewBox="0 0 11 11"><path d="M1.5,1.5 L9.5,9.5 M9.5,1.5 L1.5,9.5" stroke="#7d7d7d" stroke-width="2.2" stroke-linecap="butt"/></svg><svg class="a" style="left:615px;top:114px;" width="14" height="13" viewBox="0 0 14 13"><rect x="0" y="0" width="13.2" height="12.2" rx="1.6" fill="#3b4048"/><rect x="0.6" y="0" width="12" height="2" rx="1" fill="#1f2226"/><rect x="1.3" y="3.0" width="3.2" height="2.1" rx="0.8" fill="#69aef6"/><rect x="5.0" y="3.0" width="3.2" height="2.1" rx="0.8" fill="#69aef6"/><rect x="8.7" y="3.0" width="3.2" height="2.1" rx="0.8" fill="#69aef6"/><rect x="1.3" y="6.0" width="3.2" height="2.1" rx="0.8" fill="#f2f2f2"/><rect x="5.0" y="6.0" width="3.2" height="2.1" rx="0.8" fill="#f2f2f2"/><rect x="8.7" y="6.0" width="3.2" height="2.1" rx="0.8" fill="#f2f2f2"/><rect x="1.3" y="9.0" width="3.2" height="2.1" rx="0.8" fill="#69aef6"/><rect x="5.0" y="9.0" width="3.2" height="2.1" rx="0.8" fill="#69aef6"/><rect x="8.7" y="9.0" width="3.2" height="2.1" rx="0.8" fill="#69aef6"/></svg><div class="a" style="left:636px;top:112px;font-size:14px;line-height:16px;color:#111;">Artist</div><svg class="a" style="left:676px;top:114px;" width="11" height="11" viewBox="0 0 11 11"><path d="M1.5,1.5 L9.5,9.5 M9.5,1.5 L1.5,9.5" stroke="#7d7d7d" stroke-width="2.2" stroke-linecap="butt"/></svg><svg class="a" style="left:718px;top:114px;" width="14" height="13" viewBox="0 0 14 13"><rect x="0" y="0" width="13.2" height="12.2" rx="1.6" fill="#3b4048"/><rect x="0.6" y="0" width="12" height="2" rx="1" fill="#1f2226"/><rect x="1.3" y="3.0" width="3.2" height="2.1" rx="0.8" fill="#69aef6"/><rect x="5.0" y="3.0" width="3.2" height="2.1" rx="0.8" fill="#69aef6"/><rect x="8.7" y="3.0" width="3.2" height="2.1" rx="0.8" fill="#69aef6"/><rect x="1.3" y="6.0" width="3.2" height="2.1" rx="0.8" fill="#f2f2f2"/><rect x="5.0" y="6.0" width="3.2" height="2.1" rx="0.8" fill="#f2f2f2"/><rect x="8.7" y="6.0" width="3.2" height="2.1" rx="0.8" fill="#f2f2f2"/><rect x="1.3" y="9.0" width="3.2" height="2.1" rx="0.8" fill="#69aef6"/><rect x="5.0" y="9.0" width="3.2" height="2.1" rx="0.8" fill="#69aef6"/><rect x="8.7" y="9.0" width="3.2" height="2.1" rx="0.8" fill="#69aef6"/></svg><div class="a" style="left:738px;top:112px;font-size:14px;line-height:16px;color:#111;">Customer</div><svg class="a" style="left:804px;top:114px;" width="11" height="11" viewBox="0 0 11 11"><path d="M1.5,1.5 L9.5,9.5 M9.5,1.5 L1.5,9.5" stroke="#7d7d7d" stroke-width="2.2" stroke-linecap="butt"/></svg><div class="a" style="left:363px;top:138px;width:300px;height:419px;background:#ffffff;"></div><div class="a" style="left:663px;top:138px;width:3px;height:837px;background:#c8c8c8;"></div><div class="a" style="left:666px;top:138px;width:862px;height:419px;background:#ececec;"></div><div class="a" style="left:363px;top:557px;width:1165px;height:4px;background:#c8c8c8;"></div><div class="a" style="left:666px;top:138px;width:759px;height:45px;background:#c6c6c6;"></div><div class="a" style="left:667px;top:139px;width:40px;height:21px;background:#f5f6f8;"></div><div class="a" style="left:667px;top:161px;width:40px;height:21px;background:#f5f6f8;"></div><div class="a" style="left:708px;top:139px;width:124px;height:21px;background:#f5f6f8;"></div><div class="a" style="left:804px;top:139px;width:28px;height:21px;background:#cacaca;"></div><div class="a" style="left:804px;top:139px;width:26px;height:21px;background:linear-gradient(#efefef,#e4e2e4 45%,#c5bcc5);"></div><svg class="a" style="left:811px;top:145.5px;" width="12" height="8" viewBox="0 0 12 8"><path d="M1.5,1.5 L6,6 L10.5,1.5" fill="none" stroke="#111" stroke-width="2"/></svg><svg class="a" style="left:710px;top:143px;" width="12" height="12" viewBox="0 0 12 12"><defs><clipPath id="pkl"><rect x="0" y="0" width="6" height="12"/></clipPath><clipPath id="pkr"><rect x="6" y="0" width="6" height="12"/></clipPath></defs><g fill="#6edbfa" clip-path="url(#pkl)"><rect x="2" y="0" width="2.8" height="12" rx="1.4"/><rect x="7.2" y="0" width="2.8" height="12" rx="1.4"/><rect x="0" y="2.1" width="12" height="2.8" rx="1.4"/><rect x="0" y="7.1" width="12" height="2.8" rx="1.4"/><circle cx="3.4" cy="3.5" r="1.9"/><circle cx="8.6" cy="3.5" r="1.9"/><circle cx="3.4" cy="8.5" r="1.9"/><circle cx="8.6" cy="8.5" r="1.9"/></g><g fill="#0dc7f8" clip-path="url(#pkr)"><rect x="2" y="0" width="2.8" height="12" rx="1.4"/><rect x="7.2" y="0" width="2.8" height="12" rx="1.4"/><rect x="0" y="2.1" width="12" height="2.8" rx="1.4"/><rect x="0" y="7.1" width="12" height="2.8" rx="1.4"/><circle cx="3.4" cy="3.5" r="1.9"/><circle cx="8.6" cy="3.5" r="1.9"/><circle cx="3.4" cy="8.5" r="1.9"/><circle cx="8.6" cy="8.5" r="1.9"/></g><rect x="4.9" y="5" width="2.2" height="2" fill="#fff"/></svg><div class="a" style="left:726px;top:142px;font-size:14px;line-height:16px;color:#000;">AlbumId</div><div class="a" style="left:708px;top:161px;width:98px;height:21px;background:#fff;box-sizing:border-box;border:1px solid #a9a9a9;border-right-color:#b5b5b5;"></div><div class="a" style="left:806px;top:161px;width:26px;height:21px;background:linear-gradient(#efefef,#e4e2e4 45%,#c5bcc5);"></div><svg class="a" style="left:814px;top:165px;" width="12" height="13" viewBox="0 0 12 13"><path d="M0,0 H12 L7.5,5.5 V12.5 L4.5,11 V5.5 Z" fill="#111"/></svg><div class="a" style="left:833px;top:139px;width:325px;height:21px;background:#f5f6f8;"></div><div class="a" style="left:1130px;top:139px;width:28px;height:21px;background:#cacaca;"></div><div class="a" style="left:1130px;top:139px;width:26px;height:21px;background:linear-gradient(#efefef,#e4e2e4 45%,#c5bcc5);"></div><svg class="a" style="left:1137px;top:145.5px;" width="12" height="8" viewBox="0 0 12 8"><path d="M1.5,1.5 L6,6 L10.5,1.5" fill="none" stroke="#111" stroke-width="2"/></svg><div class="a" style="left:835px;top:142px;font-size:14px;line-height:16px;color:#000;">Title</div><div class="a" style="left:833px;top:161px;width:299px;height:21px;background:#fff;box-sizing:border-box;border:1px solid #a9a9a9;border-right-color:#b5b5b5;"></div><div class="a" style="left:1132px;top:161px;width:26px;height:21px;background:linear-gradient(#efefef,#e4e2e4 45%,#c5bcc5);"></div><svg class="a" style="left:1140px;top:165px;" width="12" height="13" viewBox="0 0 12 13"><path d="M0,0 H12 L7.5,5.5 V12.5 L4.5,11 V5.5 Z" fill="#111"/></svg><div class="a" style="left:1159px;top:139px;width:117px;height:21px;background:#f5f6f8;"></div><div class="a" style="left:1248px;top:139px;width:28px;height:21px;background:#cacaca;"></div><div class="a" style="left:1248px;top:139px;width:26px;height:21px;background:linear-gradient(#efefef,#e4e2e4 45%,#c5bcc5);"></div><svg class="a" style="left:1255px;top:145.5px;" width="12" height="8" viewBox="0 0 12 8"><path d="M1.5,1.5 L6,6 L10.5,1.5" fill="none" stroke="#111" stroke-width="2"/></svg><svg class="a" style="left:1161px;top:143px;" width="12" height="12" viewBox="0 0 12 12"><circle cx="8.6" cy="3.4" r="3.4" fill="#9ba3ad"/><circle cx="9.3" cy="2.6" r="1.15" fill="#fff"/><path d="M6.2,6 L1.3,10.9" stroke="#aab3bf" stroke-width="2.7" stroke-linecap="round"/><path d="M4.6,8.2 L6.2,9.6" stroke="#a3abb6" stroke-width="1.6"/></svg><div class="a" style="left:1177px;top:142px;font-size:14px;line-height:16px;color:#000;">ArtistId</div><div class="a" style="left:1159px;top:161px;width:91px;height:21px;background:#fff;box-sizing:border-box;border:1px solid #a9a9a9;border-right-color:#b5b5b5;"></div><div class="a" style="left:1250px;top:161px;width:26px;height:21px;background:linear-gradient(#efefef,#e4e2e4 45%,#c5bcc5);"></div><svg class="a" style="left:1258px;top:165px;" width="12" height="13" viewBox="0 0 12 13"><path d="M0,0 H12 L7.5,5.5 V12.5 L4.5,11 V5.5 Z" fill="#111"/></svg><div class="a" style="left:1277px;top:139px;width:147px;height:21px;background:#f5f6f8;"></div><div class="a" style="left:1396px;top:139px;width:28px;height:21px;background:#cacaca;"></div><div class="a" style="left:1396px;top:139px;width:26px;height:21px;background:linear-gradient(#efefef,#e4e2e4 45%,#c5bcc5);"></div><svg class="a" style="left:1403px;top:145.5px;" width="12" height="8" viewBox="0 0 12 8"><path d="M1.5,1.5 L6,6 L10.5,1.5" fill="none" stroke="#111" stroke-width="2"/></svg><div class="a" style="left:1279px;top:142px;font-size:14px;line-height:16px;color:#000;">Artist.Name</div><div class="a" style="left:1277px;top:161px;width:121px;height:21px;background:#fff;box-sizing:border-box;border:1px solid #a9a9a9;border-right-color:#b5b5b5;"></div><div class="a" style="left:1398px;top:161px;width:26px;height:21px;background:linear-gradient(#efefef,#e4e2e4 45%,#c5bcc5);"></div><svg class="a" style="left:1406px;top:165px;" width="12" height="13" viewBox="0 0 12 13"><path d="M0,0 H12 L7.5,5.5 V12.5 L4.5,11 V5.5 Z" fill="#111"/></svg><div class="a" style="left:666px;top:182px;width:759px;height:23px;background:#c6c6c6;"></div><div class="a" style="left:667px;top:183px;width:40px;height:21px;background:#f5f6f8;"></div><div class="a" style="left:669px;top:185px;font-size:14px;line-height:16px;color:#111;width:38px;overflow:hidden;">1</div><div class="a" style="left:708px;top:183px;width:124px;height:21px;background:#ffffff;"></div><div class="a" style="left:710px;top:185px;font-size:14px;line-height:16px;color:#111;width:122px;overflow:hidden;">1</div><div class="a" style="left:833px;top:183px;width:325px;height:21px;background:#ffffff;"></div><div class="a" style="left:835px;top:185px;font-size:14px;line-height:16px;color:#111;width:323px;overflow:hidden;">For Those About To Rock We Salute You</div><div class="a" style="left:1159px;top:183px;width:117px;height:21px;background:#ffffff;"></div><div class="a" style="left:1161px;top:185px;font-size:14px;line-height:16px;color:#111;width:115px;overflow:hidden;">1</div><div class="a" style="left:1174px;top:185px;font-size:14px;line-height:16px;color:#8c8c8c;width:102px;overflow:hidden;">AC/DC</div><div class="a" style="left:1277px;top:183px;width:147px;height:21px;background:#fafad2;"></div><div class="a" style="left:1279px;top:185px;font-size:14px;line-height:16px;color:#111;width:145px;overflow:hidden;">AC/DC</div><div class="a" style="left:666px;top:204px;width:759px;height:23px;background:#c6c6c6;"></div><div class="a" style="left:667px;top:205px;width:40px;height:21px;background:#f5f6f8;"></div><div class="a" style="left:669px;top:207px;font-size:14px;line-height:16px;color:#111;width:38px;overflow:hidden;">2</div><div class="a" style="left:708px;top:205px;width:124px;height:21px;background:#ffffff;"></div><div class="a" style="left:710px;top:207px;font-size:14px;line-height:16px;color:#111;width:122px;overflow:hidden;">2</div><div class="a" style="left:833px;top:205px;width:325px;height:21px;background:#ffffff;"></div><div class="a" style="left:835px;top:207px;font-size:14px;line-height:16px;color:#111;width:323px;overflow:hidden;">Balls to the Wall</div><div class="a" style="left:1159px;top:205px;width:117px;height:21px;background:#ffffff;"></div><div class="a" style="left:1161px;top:207px;font-size:14px;line-height:16px;color:#111;width:115px;overflow:hidden;">2</div><div class="a" style="left:1174px;top:207px;font-size:14px;line-height:16px;color:#8c8c8c;width:102px;overflow:hidden;">Accept</div><div class="a" style="left:1277px;top:205px;width:147px;height:21px;background:#fafad2;"></div><div class="a" style="left:1279px;top:207px;font-size:14px;line-height:16px;color:#111;width:145px;overflow:hidden;">Accept</div><div class="a" style="left:666px;top:226px;width:759px;height:23px;background:#c6c6c6;"></div><div class="a" style="left:667px;top:227px;width:40px;height:21px;background:#f5f6f8;"></div><div class="a" style="left:669px;top:229px;font-size:14px;line-height:16px;color:#111;width:38px;overflow:hidden;">3</div><div class="a" style="left:708px;top:227px;width:124px;height:21px;background:#ebebeb;"></div><div class="a" style="left:710px;top:229px;font-size:14px;line-height:16px;color:#111;width:122px;overflow:hidden;">3</div><div class="a" style="left:833px;top:227px;width:325px;height:21px;background:#ebebeb;"></div><div class="a" style="left:835px;top:229px;font-size:14px;line-height:16px;color:#111;width:323px;overflow:hidden;">Restless and Wild</div><div class="a" style="left:1159px;top:227px;width:117px;height:21px;background:#ebebeb;"></div><div class="a" style="left:1161px;top:229px;font-size:14px;line-height:16px;color:#111;width:115px;overflow:hidden;">2</div><div class="a" style="left:1174px;top:229px;font-size:14px;line-height:16px;color:#8c8c8c;width:102px;overflow:hidden;">Accept</div><div class="a" style="left:1277px;top:227px;width:147px;height:21px;background:#fafad2;"></div><div class="a" style="left:1279px;top:229px;font-size:14px;line-height:16px;color:#111;width:145px;overflow:hidden;">Accept</div><div class="a" style="left:666px;top:248px;width:759px;height:23px;background:#c6c6c6;"></div><div class="a" style="left:667px;top:249px;width:40px;height:21px;background:#f5f6f8;"></div><div class="a" style="left:669px;top:251px;font-size:14px;line-height:16px;color:#111;width:38px;overflow:hidden;">4</div><div class="a" style="left:708px;top:249px;width:124px;height:21px;background:#ffffff;"></div><div class="a" style="left:710px;top:251px;font-size:14px;line-height:16px;color:#111;width:122px;overflow:hidden;">4</div><div class="a" style="left:833px;top:249px;width:325px;height:21px;background:#ffffff;"></div><div class="a" style="left:835px;top:251px;font-size:14px;line-height:16px;color:#111;width:323px;overflow:hidden;">Let There Be Rock</div><div class="a" style="left:1159px;top:249px;width:117px;height:21px;background:#ffffff;"></div><div class="a" style="left:1161px;top:251px;font-size:14px;line-height:16px;color:#111;width:115px;overflow:hidden;">1</div><div class="a" style="left:1174px;top:251px;font-size:14px;line-height:16px;color:#8c8c8c;width:102px;overflow:hidden;">AC/DC</div><div class="a" style="left:1277px;top:249px;width:147px;height:21px;background:#fafad2;"></div><div class="a" style="left:1279px;top:251px;font-size:14px;line-height:16px;color:#111;width:145px;overflow:hidden;">AC/DC</div><div class="a" style="left:666px;top:270px;width:759px;height:23px;background:#c6c6c6;"></div><div class="a" style="left:667px;top:271px;width:40px;height:21px;background:#f5f6f8;"></div><div class="a" style="left:669px;top:273px;font-size:14px;line-height:16px;color:#111;width:38px;overflow:hidden;">5</div><div class="a" style="left:708px;top:271px;width:124px;height:21px;background:#ffffff;"></div><div class="a" style="left:710px;top:273px;font-size:14px;line-height:16px;color:#111;width:122px;overflow:hidden;">5</div><div class="a" style="left:833px;top:271px;width:325px;height:21px;background:#ffffff;"></div><div class="a" style="left:835px;top:273px;font-size:14px;line-height:16px;color:#111;width:323px;overflow:hidden;">Big Ones</div><div class="a" style="left:1159px;top:271px;width:117px;height:21px;background:#ffffff;"></div><div class="a" style="left:1161px;top:273px;font-size:14px;line-height:16px;color:#111;width:115px;overflow:hidden;">3</div><div class="a" style="left:1174px;top:273px;font-size:14px;line-height:16px;color:#8c8c8c;width:102px;overflow:hidden;">Aerosmith</div><div class="a" style="left:1277px;top:271px;width:147px;height:21px;background:#fafad2;"></div><div class="a" style="left:1279px;top:273px;font-size:14px;line-height:16px;color:#111;width:145px;overflow:hidden;">Aerosmith</div><div class="a" style="left:666px;top:292px;width:759px;height:23px;background:#c6c6c6;"></div><div class="a" style="left:667px;top:293px;width:40px;height:21px;background:#f5f6f8;"></div><div class="a" style="left:669px;top:295px;font-size:14px;line-height:16px;color:#111;width:38px;overflow:hidden;">6</div><div class="a" style="left:708px;top:293px;width:124px;height:21px;background:#e9f3fc;"></div><div class="a" style="left:710px;top:295px;font-size:14px;line-height:16px;color:#111;width:122px;overflow:hidden;">6</div><div class="a" style="left:833px;top:293px;width:325px;height:21px;background:#e9f3fc;"></div><div class="a" style="left:835px;top:295px;font-size:14px;line-height:16px;color:#111;width:323px;overflow:hidden;">Jagged Little Pill</div><div class="a" style="left:1159px;top:293px;width:117px;height:21px;background:#e9f3fc;"></div><div class="a" style="left:1161px;top:295px;font-size:14px;line-height:16px;color:#111;width:115px;overflow:hidden;">4</div><div class="a" style="left:1174px;top:295px;font-size:14px;line-height:16px;color:#8c8c8c;width:102px;overflow:hidden;">Alanis Morissette</div><div class="a" style="left:1277px;top:293px;width:147px;height:21px;background:#fafad2;"></div><div class="a" style="left:1279px;top:295px;font-size:14px;line-height:16px;color:#111;width:145px;overflow:hidden;">Alanis Morissette</div><div class="a" style="left:666px;top:314px;width:759px;height:23px;background:#c6c6c6;"></div><div class="a" style="left:667px;top:315px;width:40px;height:21px;background:#f5f6f8;"></div><div class="a" style="left:669px;top:317px;font-size:14px;line-height:16px;color:#111;width:38px;overflow:hidden;">7</div><div class="a" style="left:708px;top:315px;width:124px;height:21px;background:#ffffff;"></div><div class="a" style="left:710px;top:317px;font-size:14px;line-height:16px;color:#111;width:122px;overflow:hidden;">7</div><div class="a" style="left:833px;top:315px;width:325px;height:21px;background:#0ebcf9;"></div><div class="a" style="left:835px;top:317px;font-size:14px;line-height:16px;color:#fff;width:323px;overflow:hidden;">Facelift</div><div class="a" style="left:1151px;top:328px;width:7px;height:8px;background:#2f5fe0;"></div><div class="a" style="left:1159px;top:315px;width:117px;height:21px;background:#ffffff;"></div><div class="a" style="left:1161px;top:317px;font-size:14px;line-height:16px;color:#111;width:115px;overflow:hidden;">5</div><div class="a" style="left:1174px;top:317px;font-size:14px;line-height:16px;color:#8c8c8c;width:102px;overflow:hidden;">Alice In Chains</div><div class="a" style="left:1277px;top:315px;width:147px;height:21px;background:#fafad2;"></div><div class="a" style="left:1279px;top:317px;font-size:14px;line-height:16px;color:#111;width:145px;overflow:hidden;">Alice In Chains</div><div class="a" style="left:666px;top:336px;width:759px;height:23px;background:#c6c6c6;"></div><div class="a" style="left:667px;top:337px;width:40px;height:21px;background:#f5f6f8;"></div><div class="a" style="left:669px;top:339px;font-size:14px;line-height:16px;color:#111;width:38px;overflow:hidden;">8</div><div class="a" style="left:708px;top:337px;width:124px;height:21px;background:#ffffff;"></div><div class="a" style="left:710px;top:339px;font-size:14px;line-height:16px;color:#111;width:122px;overflow:hidden;">8</div><div class="a" style="left:833px;top:337px;width:325px;height:21px;background:#ffffff;"></div><div class="a" style="left:835px;top:339px;font-size:14px;line-height:16px;color:#111;width:323px;overflow:hidden;">Warner 25 Anos</div><div class="a" style="left:1159px;top:337px;width:117px;height:21px;background:#ffffff;"></div><div class="a" style="left:1161px;top:339px;font-size:14px;line-height:16px;color:#111;width:115px;overflow:hidden;">6</div><div class="a" style="left:1174px;top:339px;font-size:14px;line-height:16px;color:#8c8c8c;width:102px;overflow:hidden;">Antônio Carlos Jobim</div><div class="a" style="left:1277px;top:337px;width:147px;height:21px;background:#fafad2;"></div><div class="a" style="left:1279px;top:339px;font-size:14px;line-height:16px;color:#111;width:145px;overflow:hidden;">Antônio Carlos Jobim</div><div class="a" style="left:666px;top:358px;width:759px;height:23px;background:#c6c6c6;"></div><div class="a" style="left:667px;top:359px;width:40px;height:21px;background:#f5f6f8;"></div><div class="a" style="left:669px;top:361px;font-size:14px;line-height:16px;color:#111;width:38px;overflow:hidden;">9</div><div class="a" style="left:708px;top:359px;width:124px;height:21px;background:#ebebeb;"></div><div class="a" style="left:710px;top:361px;font-size:14px;line-height:16px;color:#111;width:122px;overflow:hidden;">9</div><div class="a" style="left:833px;top:359px;width:325px;height:21px;background:#ebebeb;"></div><div class="a" style="left:835px;top:361px;font-size:14px;line-height:16px;color:#111;width:323px;overflow:hidden;">Plays Metallica By Four Cellos</div><div class="a" style="left:1159px;top:359px;width:117px;height:21px;background:#ebebeb;"></div><div class="a" style="left:1161px;top:361px;font-size:14px;line-height:16px;color:#111;width:115px;overflow:hidden;">7</div><div class="a" style="left:1174px;top:361px;font-size:14px;line-height:16px;color:#8c8c8c;width:102px;overflow:hidden;">Apocalyptica</div><div class="a" style="left:1277px;top:359px;width:147px;height:21px;background:#fafad2;"></div><div class="a" style="left:1279px;top:361px;font-size:14px;line-height:16px;color:#111;width:145px;overflow:hidden;">Apocalyptica</div><div class="a" style="left:666px;top:380px;width:759px;height:23px;background:#c6c6c6;"></div><div class="a" style="left:667px;top:381px;width:40px;height:21px;background:#f5f6f8;"></div><div class="a" style="left:669px;top:383px;font-size:14px;line-height:16px;color:#111;width:38px;overflow:hidden;">10</div><div class="a" style="left:708px;top:381px;width:124px;height:21px;background:#ffffff;"></div><div class="a" style="left:710px;top:383px;font-size:14px;line-height:16px;color:#111;width:122px;overflow:hidden;">10</div><div class="a" style="left:833px;top:381px;width:325px;height:21px;background:#ffffff;"></div><div class="a" style="left:835px;top:383px;font-size:14px;line-height:16px;color:#111;width:323px;overflow:hidden;">Audioslave</div><div class="a" style="left:1159px;top:381px;width:117px;height:21px;background:#ffffff;"></div><div class="a" style="left:1161px;top:383px;font-size:14px;line-height:16px;color:#111;width:115px;overflow:hidden;">8</div><div class="a" style="left:1174px;top:383px;font-size:14px;line-height:16px;color:#8c8c8c;width:102px;overflow:hidden;">Audioslave</div><div class="a" style="left:1277px;top:381px;width:147px;height:21px;background:#fafad2;"></div><div class="a" style="left:1279px;top:383px;font-size:14px;line-height:16px;color:#111;width:145px;overflow:hidden;">Audioslave</div><div class="a" style="left:666px;top:402px;width:759px;height:23px;background:#c6c6c6;"></div><div class="a" style="left:667px;top:403px;width:40px;height:21px;background:#f5f6f8;"></div><div class="a" style="left:669px;top:405px;font-size:14px;line-height:16px;color:#111;width:38px;overflow:hidden;">11</div><div class="a" style="left:708px;top:403px;width:124px;height:21px;background:#ffffff;"></div><div class="a" style="left:710px;top:405px;font-size:14px;line-height:16px;color:#111;width:122px;overflow:hidden;">11</div><div class="a" style="left:833px;top:403px;width:325px;height:21px;background:#ffffff;"></div><div class="a" style="left:835px;top:405px;font-size:14px;line-height:16px;color:#111;width:323px;overflow:hidden;">Out Of Exile</div><div class="a" style="left:1159px;top:403px;width:117px;height:21px;background:#ffffff;"></div><div class="a" style="left:1161px;top:405px;font-size:14px;line-height:16px;color:#111;width:115px;overflow:hidden;">8</div><div class="a" style="left:1174px;top:405px;font-size:14px;line-height:16px;color:#8c8c8c;width:102px;overflow:hidden;">Audioslave</div><div class="a" style="left:1277px;top:403px;width:147px;height:21px;background:#fafad2;"></div><div class="a" style="left:1279px;top:405px;font-size:14px;line-height:16px;color:#111;width:145px;overflow:hidden;">Audioslave</div><div class="a" style="left:666px;top:424px;width:759px;height:23px;background:#c6c6c6;"></div><div class="a" style="left:667px;top:425px;width:40px;height:21px;background:#f5f6f8;"></div><div class="a" style="left:669px;top:427px;font-size:14px;line-height:16px;color:#111;width:38px;overflow:hidden;">12</div><div class="a" style="left:708px;top:425px;width:124px;height:21px;background:#e9f3fc;"></div><div class="a" style="left:710px;top:427px;font-size:14px;line-height:16px;color:#111;width:122px;overflow:hidden;">12</div><div class="a" style="left:833px;top:425px;width:325px;height:21px;background:#e9f3fc;"></div><div class="a" style="left:835px;top:427px;font-size:14px;line-height:16px;color:#111;width:323px;overflow:hidden;">BackBeat Soundtrack</div><div class="a" style="left:1159px;top:425px;width:117px;height:21px;background:#e9f3fc;"></div><div class="a" style="left:1161px;top:427px;font-size:14px;line-height:16px;color:#111;width:115px;overflow:hidden;">9</div><div class="a" style="left:1174px;top:427px;font-size:14px;line-height:16px;color:#8c8c8c;width:102px;overflow:hidden;">BackBeat</div><div class="a" style="left:1277px;top:425px;width:147px;height:21px;background:#fafad2;"></div><div class="a" style="left:1279px;top:427px;font-size:14px;line-height:16px;color:#111;width:145px;overflow:hidden;">BackBeat</div><div class="a" style="left:666px;top:446px;width:759px;height:23px;background:#c6c6c6;"></div><div class="a" style="left:667px;top:447px;width:40px;height:21px;background:#f5f6f8;"></div><div class="a" style="left:669px;top:449px;font-size:14px;line-height:16px;color:#111;width:38px;overflow:hidden;">13</div><div class="a" style="left:708px;top:447px;width:124px;height:21px;background:#ffffff;"></div><div class="a" style="left:710px;top:449px;font-size:14px;line-height:16px;color:#111;width:122px;overflow:hidden;">13</div><div class="a" style="left:833px;top:447px;width:325px;height:21px;background:#ffffff;"></div><div class="a" style="left:835px;top:449px;font-size:14px;line-height:16px;color:#111;width:323px;overflow:hidden;">The Best Of Billy Cobham</div><div class="a" style="left:1159px;top:447px;width:117px;height:21px;background:#ffffff;"></div><div class="a" style="left:1161px;top:449px;font-size:14px;line-height:16px;color:#111;width:115px;overflow:hidden;">10</div><div class="a" style="left:1182px;top:449px;font-size:14px;line-height:16px;color:#8c8c8c;width:94px;overflow:hidden;">Billy Cobham</div><div class="a" style="left:1277px;top:447px;width:147px;height:21px;background:#fafad2;"></div><div class="a" style="left:1279px;top:449px;font-size:14px;line-height:16px;color:#111;width:145px;overflow:hidden;">Billy Cobham</div><div class="a" style="left:666px;top:468px;width:759px;height:23px;background:#c6c6c6;"></div><div class="a" style="left:667px;top:469px;width:40px;height:21px;background:#f5f6f8;"></div><div class="a" style="left:669px;top:471px;font-size:14px;line-height:16px;color:#111;width:38px;overflow:hidden;">14</div><div class="a" style="left:708px;top:469px;width:124px;height:21px;background:#ffffff;"></div><div class="a" style="left:710px;top:471px;font-size:14px;line-height:16px;color:#111;width:122px;overflow:hidden;">14</div><div class="a" style="left:833px;top:469px;width:325px;height:21px;background:#ffffff;"></div><div class="a" style="left:835px;top:471px;font-size:14px;line-height:16px;color:#111;width:323px;overflow:hidden;">Alcohol Fueled Brewtality Live! [Disc 1]</div><div class="a" style="left:1159px;top:469px;width:117px;height:21px;background:#ffffff;"></div><div class="a" style="left:1161px;top:471px;font-size:14px;line-height:16px;color:#111;width:115px;overflow:hidden;">11</div><div class="a" style="left:1182px;top:471px;font-size:14px;line-height:16px;color:#8c8c8c;width:94px;overflow:hidden;">Black Label Society</div><div class="a" style="left:1277px;top:469px;width:147px;height:21px;background:#fafad2;"></div><div class="a" style="left:1279px;top:471px;font-size:14px;line-height:16px;color:#111;width:145px;overflow:hidden;">Black Label Society</div><div class="a" style="left:666px;top:490px;width:759px;height:23px;background:#c6c6c6;"></div><div class="a" style="left:667px;top:491px;width:40px;height:21px;background:#f5f6f8;"></div><div class="a" style="left:669px;top:493px;font-size:14px;line-height:16px;color:#111;width:38px;overflow:hidden;">15</div><div class="a" style="left:708px;top:491px;width:124px;height:21px;background:#ebebeb;"></div><div class="a" style="left:710px;top:493px;font-size:14px;line-height:16px;color:#111;width:122px;overflow:hidden;">15</div><div class="a" style="left:833px;top:491px;width:325px;height:21px;background:#ebebeb;"></div><div class="a" style="left:835px;top:493px;font-size:14px;line-height:16px;color:#111;width:323px;overflow:hidden;">Alcohol Fueled Brewtality Live! [Disc 2]</div><div class="a" style="left:1159px;top:491px;width:117px;height:21px;background:#ebebeb;"></div><div class="a" style="left:1161px;top:493px;font-size:14px;line-height:16px;color:#111;width:115px;overflow:hidden;">11</div><div class="a" style="left:1182px;top:493px;font-size:14px;line-height:16px;color:#8c8c8c;width:94px;overflow:hidden;">Black Label Society</div><div class="a" style="left:1277px;top:491px;width:147px;height:21px;background:#fafad2;"></div><div class="a" style="left:1279px;top:493px;font-size:14px;line-height:16px;color:#111;width:145px;overflow:hidden;">Black Label Society</div><div class="a" style="left:666px;top:512px;width:759px;height:23px;background:#c6c6c6;"></div><div class="a" style="left:667px;top:513px;width:40px;height:21px;background:#f5f6f8;"></div><div class="a" style="left:669px;top:515px;font-size:14px;line-height:16px;color:#111;width:38px;overflow:hidden;">16</div><div class="a" style="left:708px;top:513px;width:124px;height:21px;background:#ffffff;"></div><div class="a" style="left:710px;top:515px;font-size:14px;line-height:16px;color:#111;width:122px;overflow:hidden;">16</div><div class="a" style="left:833px;top:513px;width:325px;height:21px;background:#ffffff;"></div><div class="a" style="left:835px;top:515px;font-size:14px;line-height:16px;color:#111;width:323px;overflow:hidden;">Black Sabbath</div><div class="a" style="left:1159px;top:513px;width:117px;height:21px;background:#ffffff;"></div><div class="a" style="left:1161px;top:515px;font-size:14px;line-height:16px;color:#111;width:115px;overflow:hidden;">12</div><div class="a" style="left:1182px;top:515px;font-size:14px;line-height:16px;color:#8c8c8c;width:94px;overflow:hidden;">Black Sabbath</div><div class="a" style="left:1277px;top:513px;width:147px;height:21px;background:#fafad2;"></div><div class="a" style="left:1279px;top:515px;font-size:14px;line-height:16px;color:#111;width:145px;overflow:hidden;">Black Sabbath</div><div class="a" style="left:666px;top:534px;width:759px;height:23px;background:#c6c6c6;"></div><div class="a" style="left:667px;top:535px;width:40px;height:21px;background:#f5f6f8;"></div><div class="a" style="left:669px;top:537px;font-size:14px;line-height:16px;color:#111;width:38px;overflow:hidden;">17</div><div class="a" style="left:708px;top:535px;width:124px;height:21px;background:#ffffff;"></div><div class="a" style="left:710px;top:537px;font-size:14px;line-height:16px;color:#111;width:122px;overflow:hidden;">17</div><div class="a" style="left:833px;top:535px;width:325px;height:21px;background:#ffffff;"></div><div class="a" style="left:835px;top:537px;font-size:14px;line-height:16px;color:#111;width:323px;overflow:hidden;">Black Sabbath Vol. 4 (Remaster)</div><div class="a" style="left:1159px;top:535px;width:117px;height:21px;background:#ffffff;"></div><div class="a" style="left:1161px;top:537px;font-size:14px;line-height:16px;color:#111;width:115px;overflow:hidden;">12</div><div class="a" style="left:1182px;top:537px;font-size:14px;line-height:16px;color:#8c8c8c;width:94px;overflow:hidden;">Black Sabbath</div><div class="a" style="left:1277px;top:535px;width:147px;height:21px;background:#fafad2;"></div><div class="a" style="left:1279px;top:537px;font-size:14px;line-height:16px;color:#111;width:145px;overflow:hidden;">Black Sabbath</div><div class="a" style="left:666px;top:542px;width:862px;height:15px;background:#f0f0f0;"></div><svg class="a" style="left:671px;top:546px;" width="5" height="8" viewBox="0 0 5 8"><path d="M4.5,0 V8 L0,4 Z" fill="#a3a3a3"/></svg><svg class="a" style="left:1502px;top:546px;" width="5" height="8" viewBox="0 0 5 8"><path d="M0,0 V8 L4.5,4 Z" fill="#a3a3a3"/></svg><div class="a" style="left:1513px;top:542px;width:15px;height:15px;background:#dcdcdc;"></div><div class="a" style="left:1513px;top:138px;width:15px;height:404px;background:#f0f0f0;"></div><svg class="a" style="left:1516.5px;top:144px;" width="8" height="5" viewBox="0 0 8 5"><path d="M0,4.5 L4,0 L8,4.5 Z" fill="#a3a3a3"/></svg><svg class="a" style="left:1516.5px;top:530px;" width="8" height="5" viewBox="0 0 8 5"><path d="M0,0 L8,0 L4,4.5 Z" fill="#5e5e5e"/></svg><div class="a" style="left:1515px;top:153px;width:11px;height:67px;background:#c1c1c1;"></div><div class="a" style="left:1424px;top:521px;width:64px;height:16px;background:#fafad2;"></div><div class="a" style="left:1425px;top:521px;font-size:14px;line-height:16px;color:#111;letter-spacing:-0.3px;">Rows: 347</div><div class="a" style="left:363px;top:561px;width:1165px;height:31px;background:#dcecec;"></div><svg class="a" style="left:373px;top:568px;" width="16" height="16" viewBox="0 0 16 16"><g stroke="#e0607a" stroke-width="1"><path d="M2.5,2.5 L8,4.5 L12.5,1.5 M8,4.5 L12.5,5.5 M2.5,2.5 L2.5,9 L1,14 M2.5,9 L4.5,14 M5.5,7 L7.5,11 L10,8 M7.5,11 L11.5,12.5"/></g><g fill="#9ad4f7" stroke="#111" stroke-width="0.9"><circle cx="2.5" cy="2.5" r="2"/><circle cx="8" cy="4.5" r="1.6"/><circle cx="2.5" cy="9" r="1.6"/><circle cx="7.5" cy="11" r="1.6"/><circle cx="12.5" cy="12.5" r="2"/></g><g fill="#111"><circle cx="12.8" cy="1.5" r="1"/><circle cx="12.8" cy="5.5" r="1"/><circle cx="5.5" cy="7" r="1"/><circle cx="10" cy="8" r="1"/><circle cx="1" cy="14.5" r="1"/><circle cx="4.5" cy="14.5" r="1"/></g></svg><div class="a" style="left:399px;top:568px;font-size:14px;line-height:16px;font-weight:bold;color:#111;letter-spacing:-0.1px;">Track [AlbumId] = master [AlbumId]</div><svg class="a" style="left:1462px;top:570px;" width="11" height="11" viewBox="0 0 11 11"><path d="M1.5,1.5 L9.5,9.5 M9.5,1.5 L1.5,9.5" stroke="#1500ff" stroke-width="2.6" stroke-linecap="butt"/></svg><div class="a" style="left:1478px;top:567px;font-size:14px;line-height:16px;color:#111;">Close</div><div class="a" style="left:363px;top:592px;width:300px;height:383px;background:#ffffff;"></div><div class="a" style="left:666px;top:592px;width:862px;height:383px;background:#ececec;"></div><div class="a" style="left:666px;top:592px;width:848px;height:45px;background:#c6c6c6;"></div><div class="a" style="left:667px;top:593px;width:40px;height:21px;background:#f5f6f8;"></div><div class="a" style="left:667px;top:615px;width:40px;height:21px;background:#f5f6f8;"></div><div class="a" style="left:667px;top:615px;width:26px;height:21px;background:linear-gradient(#efefef,#e4e2e4 45%,#c5bcc5);box-sizing:border-box;border-right:1px solid #bbb;"></div><svg class="a" style="left:674.5px;top:620px;" width="10" height="10" viewBox="0 0 11 11"><path d="M1.5,1.5 L9.5,9.5 M9.5,1.5 L1.5,9.5" stroke="#111" stroke-width="2.8" stroke-linecap="butt"/></svg><div class="a" style="left:708px;top:593px;width:118px;height:21px;background:#f5f6f8;"></div><div class="a" style="left:798px;top:593px;width:28px;height:21px;background:#cacaca;"></div><div class="a" style="left:798px;top:593px;width:26px;height:21px;background:linear-gradient(#efefef,#e4e2e4 45%,#c5bcc5);"></div><svg class="a" style="left:805px;top:599.5px;" width="12" height="8" viewBox="0 0 12 8"><path d="M1.5,1.5 L6,6 L10.5,1.5" fill="none" stroke="#111" stroke-width="2"/></svg><svg class="a" style="left:710px;top:597px;" width="12" height="12" viewBox="0 0 12 12"><defs><clipPath id="pkl"><rect x="0" y="0" width="6" height="12"/></clipPath><clipPath id="pkr"><rect x="6" y="0" width="6" height="12"/></clipPath></defs><g fill="#6edbfa" clip-path="url(#pkl)"><rect x="2" y="0" width="2.8" height="12" rx="1.4"/><rect x="7.2" y="0" width="2.8" height="12" rx="1.4"/><rect x="0" y="2.1" width="12" height="2.8" rx="1.4"/><rect x="0" y="7.1" width="12" height="2.8" rx="1.4"/><circle cx="3.4" cy="3.5" r="1.9"/><circle cx="8.6" cy="3.5" r="1.9"/><circle cx="3.4" cy="8.5" r="1.9"/><circle cx="8.6" cy="8.5" r="1.9"/></g><g fill="#0dc7f8" clip-path="url(#pkr)"><rect x="2" y="0" width="2.8" height="12" rx="1.4"/><rect x="7.2" y="0" width="2.8" height="12" rx="1.4"/><rect x="0" y="2.1" width="12" height="2.8" rx="1.4"/><rect x="0" y="7.1" width="12" height="2.8" rx="1.4"/><circle cx="3.4" cy="3.5" r="1.9"/><circle cx="8.6" cy="3.5" r="1.9"/><circle cx="3.4" cy="8.5" r="1.9"/><circle cx="8.6" cy="8.5" r="1.9"/></g><rect x="4.9" y="5" width="2.2" height="2" fill="#fff"/></svg><div class="a" style="left:726px;top:596px;font-size:14px;line-height:16px;color:#000;">TrackId</div><div class="a" style="left:708px;top:615px;width:92px;height:21px;background:#fff;box-sizing:border-box;border:1px solid #a9a9a9;border-right-color:#b5b5b5;"></div><div class="a" style="left:800px;top:615px;width:26px;height:21px;background:linear-gradient(#efefef,#e4e2e4 45%,#c5bcc5);"></div><svg class="a" style="left:808px;top:619px;" width="12" height="13" viewBox="0 0 12 13"><path d="M0,0 H12 L7.5,5.5 V12.5 L4.5,11 V5.5 Z" fill="#111"/></svg><div class="a" style="left:827px;top:593px;width:188px;height:21px;background:#f5f6f8;"></div><div class="a" style="left:987px;top:593px;width:28px;height:21px;background:#cacaca;"></div><div class="a" style="left:987px;top:593px;width:26px;height:21px;background:linear-gradient(#efefef,#e4e2e4 45%,#c5bcc5);"></div><svg class="a" style="left:994px;top:599.5px;" width="12" height="8" viewBox="0 0 12 8"><path d="M1.5,1.5 L6,6 L10.5,1.5" fill="none" stroke="#111" stroke-width="2"/></svg><div class="a" style="left:829px;top:596px;font-size:14px;line-height:16px;color:#000;">Name</div><div class="a" style="left:827px;top:615px;width:162px;height:21px;background:#fff;box-sizing:border-box;border:1px solid #a9a9a9;border-right-color:#b5b5b5;"></div><div class="a" style="left:989px;top:615px;width:26px;height:21px;background:linear-gradient(#efefef,#e4e2e4 45%,#c5bcc5);"></div><svg class="a" style="left:997px;top:619px;" width="12" height="13" viewBox="0 0 12 13"><path d="M0,0 H12 L7.5,5.5 V12.5 L4.5,11 V5.5 Z" fill="#111"/></svg><div class="a" style="left:1016px;top:593px;width:124px;height:21px;background:#f5f6f8;"></div><div class="a" style="left:1112px;top:593px;width:28px;height:21px;background:#cacaca;"></div><div class="a" style="left:1112px;top:593px;width:26px;height:21px;background:linear-gradient(#efefef,#e4e2e4 45%,#c5bcc5);"></div><svg class="a" style="left:1119px;top:599.5px;" width="12" height="8" viewBox="0 0 12 8"><path d="M1.5,1.5 L6,6 L10.5,1.5" fill="none" stroke="#111" stroke-width="2"/></svg><svg class="a" style="left:1018px;top:597px;" width="12" height="12" viewBox="0 0 12 12"><circle cx="8.6" cy="3.4" r="3.4" fill="#9ba3ad"/><circle cx="9.3" cy="2.6" r="1.15" fill="#fff"/><path d="M6.2,6 L1.3,10.9" stroke="#aab3bf" stroke-width="2.7" stroke-linecap="round"/><path d="M4.6,8.2 L6.2,9.6" stroke="#a3abb6" stroke-width="1.6"/></svg><div class="a" style="left:1034px;top:596px;font-size:14px;line-height:16px;color:#000;">AlbumId</div><div class="a" style="left:1016px;top:615px;width:98px;height:21px;background:#c8f7c8;box-sizing:border-box;border:1px solid #a9a9a9;border-right-color:#b5b5b5;"></div><div class="a" style="left:1019px;top:617px;font-size:14px;line-height:16px;color:#111;">="7"</div><div class="a" style="left:1114px;top:615px;width:26px;height:21px;background:linear-gradient(#efefef,#e4e2e4 45%,#c5bcc5);"></div><svg class="a" style="left:1122px;top:619px;" width="12" height="13" viewBox="0 0 12 13"><path d="M0,0 H12 L7.5,5.5 V12.5 L4.5,11 V5.5 Z" fill="#111"/></svg><div class="a" style="left:1141px;top:593px;width:152px;height:21px;background:#f5f6f8;"></div><div class="a" style="left:1265px;top:593px;width:28px;height:21px;background:#cacaca;"></div><div class="a" style="left:1265px;top:593px;width:26px;height:21px;background:linear-gradient(#efefef,#e4e2e4 45%,#c5bcc5);"></div><svg class="a" style="left:1272px;top:599.5px;" width="12" height="8" viewBox="0 0 12 8"><path d="M1.5,1.5 L6,6 L10.5,1.5" fill="none" stroke="#111" stroke-width="2"/></svg><svg class="a" style="left:1143px;top:597px;" width="12" height="12" viewBox="0 0 12 12"><circle cx="8.6" cy="3.4" r="3.4" fill="#9ba3ad"/><circle cx="9.3" cy="2.6" r="1.15" fill="#fff"/><path d="M6.2,6 L1.3,10.9" stroke="#aab3bf" stroke-width="2.7" stroke-linecap="round"/><path d="M4.6,8.2 L6.2,9.6" stroke="#a3abb6" stroke-width="1.6"/></svg><div class="a" style="left:1159px;top:596px;font-size:14px;line-height:16px;color:#000;">MediaTypeId</div><div class="a" style="left:1141px;top:615px;width:126px;height:21px;background:#fff;box-sizing:border-box;border:1px solid #a9a9a9;border-right-color:#b5b5b5;"></div><div class="a" style="left:1267px;top:615px;width:26px;height:21px;background:linear-gradient(#efefef,#e4e2e4 45%,#c5bcc5);"></div><svg class="a" style="left:1275px;top:619px;" width="12" height="13" viewBox="0 0 12 13"><path d="M0,0 H12 L7.5,5.5 V12.5 L4.5,11 V5.5 Z" fill="#111"/></svg><div class="a" style="left:1294px;top:593px;width:121px;height:21px;background:#f5f6f8;"></div><div class="a" style="left:1387px;top:593px;width:28px;height:21px;background:#cacaca;"></div><div class="a" style="left:1387px;top:593px;width:26px;height:21px;background:linear-gradient(#efefef,#e4e2e4 45%,#c5bcc5);"></div><svg class="a" style="left:1394px;top:599.5px;" width="12" height="8" viewBox="0 0 12 8"><path d="M1.5,1.5 L6,6 L10.5,1.5" fill="none" stroke="#111" stroke-width="2"/></svg><svg class="a" style="left:1296px;top:597px;" width="12" height="12" viewBox="0 0 12 12"><circle cx="8.6" cy="3.4" r="3.4" fill="#9ba3ad"/><circle cx="9.3" cy="2.6" r="1.15" fill="#fff"/><path d="M6.2,6 L1.3,10.9" stroke="#aab3bf" stroke-width="2.7" stroke-linecap="round"/><path d="M4.6,8.2 L6.2,9.6" stroke="#a3abb6" stroke-width="1.6"/></svg><div class="a" style="left:1312px;top:596px;font-size:14px;line-height:16px;color:#000;">GenreId</div><div class="a" style="left:1294px;top:615px;width:95px;height:21px;background:#fff;box-sizing:border-box;border:1px solid #a9a9a9;border-right-color:#b5b5b5;"></div><div class="a" style="left:1389px;top:615px;width:26px;height:21px;background:linear-gradient(#efefef,#e4e2e4 45%,#c5bcc5);"></div><svg class="a" style="left:1397px;top:619px;" width="12" height="13" viewBox="0 0 12 13"><path d="M0,0 H12 L7.5,5.5 V12.5 L4.5,11 V5.5 Z" fill="#111"/></svg><div class="a" style="left:1416px;top:593px;width:97px;height:21px;background:#f5f6f8;"></div><div class="a" style="left:1418px;top:596px;font-size:14px;line-height:16px;color:#000;">Composer</div><div class="a" style="left:1416px;top:615px;width:99px;height:21px;background:#fff;box-sizing:border-box;border:1px solid #a9a9a9;border-right-color:#b5b5b5;"></div><div class="a" style="left:666px;top:636px;width:848px;height:23px;background:#c6c6c6;"></div><div class="a" style="left:667px;top:637px;width:40px;height:21px;background:#f5f6f8;"></div><div class="a" style="left:669px;top:639px;font-size:14px;line-height:16px;color:#111;width:38px;overflow:hidden;">1</div><div class="a" style="left:708px;top:637px;width:118px;height:21px;background:#0ebcf9;"></div><div class="a" style="left:710px;top:639px;font-size:14px;line-height:16px;color:#fff;width:116px;overflow:hidden;">51</div><div class="a" style="left:819px;top:650px;width:7px;height:8px;background:#2f5fe0;"></div><div class="a" style="left:827px;top:637px;width:188px;height:21px;background:#ffffff;"></div><div class="a" style="left:829px;top:639px;font-size:14px;line-height:16px;color:#111;width:186px;overflow:hidden;">We Die Young</div><div class="a" style="left:1016px;top:637px;width:124px;height:21px;background:#ffffff;"></div><div class="a" style="left:1018px;top:639px;font-size:14px;line-height:16px;color:#111;width:122px;overflow:hidden;">7</div><div class="a" style="left:1031px;top:639px;font-size:14px;line-height:16px;color:#8c8c8c;width:109px;overflow:hidden;">Facelift</div><div class="a" style="left:1141px;top:637px;width:152px;height:21px;background:#ffffff;"></div><div class="a" style="left:1143px;top:639px;font-size:14px;line-height:16px;color:#111;width:150px;overflow:hidden;">1</div><div class="a" style="left:1156px;top:639px;font-size:14px;line-height:16px;color:#8c8c8c;width:137px;overflow:hidden;">MPEG audio file</div><div class="a" style="left:1294px;top:637px;width:121px;height:21px;background:#ffffff;"></div><div class="a" style="left:1296px;top:639px;font-size:14px;line-height:16px;color:#111;width:119px;overflow:hidden;">1</div><div class="a" style="left:1309px;top:639px;font-size:14px;line-height:16px;color:#8c8c8c;width:106px;overflow:hidden;">Rock</div><div class="a" style="left:1416px;top:637px;width:97px;height:21px;background:#ffffff;"></div><div class="a" style="left:1418px;top:639px;font-size:14px;line-height:16px;color:#111;width:95px;overflow:hidden;">Jerry Cantrell</div><div class="a" style="left:666px;top:658px;width:848px;height:23px;background:#c6c6c6;"></div><div class="a" style="left:667px;top:659px;width:40px;height:21px;background:#f5f6f8;"></div><div class="a" style="left:669px;top:661px;font-size:14px;line-height:16px;color:#111;width:38px;overflow:hidden;">2</div><div class="a" style="left:708px;top:659px;width:118px;height:21px;background:#ffffff;"></div><div class="a" style="left:710px;top:661px;font-size:14px;line-height:16px;color:#111;width:116px;overflow:hidden;">52</div><div class="a" style="left:827px;top:659px;width:188px;height:21px;background:#ffffff;"></div><div class="a" style="left:829px;top:661px;font-size:14px;line-height:16px;color:#111;width:186px;overflow:hidden;">Man In The Box</div><div class="a" style="left:1016px;top:659px;width:124px;height:21px;background:#ffffff;"></div><div class="a" style="left:1018px;top:661px;font-size:14px;line-height:16px;color:#111;width:122px;overflow:hidden;">7</div><div class="a" style="left:1031px;top:661px;font-size:14px;line-height:16px;color:#8c8c8c;width:109px;overflow:hidden;">Facelift</div><div class="a" style="left:1141px;top:659px;width:152px;height:21px;background:#ffffff;"></div><div class="a" style="left:1143px;top:661px;font-size:14px;line-height:16px;color:#111;width:150px;overflow:hidden;">1</div><div class="a" style="left:1156px;top:661px;font-size:14px;line-height:16px;color:#8c8c8c;width:137px;overflow:hidden;">MPEG audio file</div><div class="a" style="left:1294px;top:659px;width:121px;height:21px;background:#ffffff;"></div><div class="a" style="left:1296px;top:661px;font-size:14px;line-height:16px;color:#111;width:119px;overflow:hidden;">1</div><div class="a" style="left:1309px;top:661px;font-size:14px;line-height:16px;color:#8c8c8c;width:106px;overflow:hidden;">Rock</div><div class="a" style="left:1416px;top:659px;width:97px;height:21px;background:#ffffff;"></div><div class="a" style="left:1418px;top:661px;font-size:14px;line-height:16px;color:#111;width:95px;overflow:hidden;">Jerry Cantrell, Layne Staley</div><div class="a" style="left:666px;top:680px;width:848px;height:23px;background:#c6c6c6;"></div><div class="a" style="left:667px;top:681px;width:40px;height:21px;background:#f5f6f8;"></div><div class="a" style="left:669px;top:683px;font-size:14px;line-height:16px;color:#111;width:38px;overflow:hidden;">3</div><div class="a" style="left:708px;top:681px;width:118px;height:21px;background:#ebebeb;"></div><div class="a" style="left:710px;top:683px;font-size:14px;line-height:16px;color:#111;width:116px;overflow:hidden;">53</div><div class="a" style="left:827px;top:681px;width:188px;height:21px;background:#ebebeb;"></div><div class="a" style="left:829px;top:683px;font-size:14px;line-height:16px;color:#111;width:186px;overflow:hidden;">Sea Of Sorrow</div><div class="a" style="left:1016px;top:681px;width:124px;height:21px;background:#ebebeb;"></div><div class="a" style="left:1018px;top:683px;font-size:14px;line-height:16px;color:#111;width:122px;overflow:hidden;">7</div><div class="a" style="left:1031px;top:683px;font-size:14px;line-height:16px;color:#8c8c8c;width:109px;overflow:hidden;">Facelift</div><div class="a" style="left:1141px;top:681px;width:152px;height:21px;background:#ebebeb;"></div><div class="a" style="left:1143px;top:683px;font-size:14px;line-height:16px;color:#111;width:150px;overflow:hidden;">1</div><div class="a" style="left:1156px;top:683px;font-size:14px;line-height:16px;color:#8c8c8c;width:137px;overflow:hidden;">MPEG audio file</div><div class="a" style="left:1294px;top:681px;width:121px;height:21px;background:#ebebeb;"></div><div class="a" style="left:1296px;top:683px;font-size:14px;line-height:16px;color:#111;width:119px;overflow:hidden;">1</div><div class="a" style="left:1309px;top:683px;font-size:14px;line-height:16px;color:#8c8c8c;width:106px;overflow:hidden;">Rock</div><div class="a" style="left:1416px;top:681px;width:97px;height:21px;background:#ebebeb;"></div><div class="a" style="left:1418px;top:683px;font-size:14px;line-height:16px;color:#111;width:95px;overflow:hidden;">Jerry Cantrell</div><div class="a" style="left:666px;top:702px;width:848px;height:23px;background:#c6c6c6;"></div><div class="a" style="left:667px;top:703px;width:40px;height:21px;background:#f5f6f8;"></div><div class="a" style="left:669px;top:705px;font-size:14px;line-height:16px;color:#111;width:38px;overflow:hidden;">4</div><div class="a" style="left:708px;top:703px;width:118px;height:21px;background:#ffffff;"></div><div class="a" style="left:710px;top:705px;font-size:14px;line-height:16px;color:#111;width:116px;overflow:hidden;">54</div><div class="a" style="left:827px;top:703px;width:188px;height:21px;background:#ffffff;"></div><div class="a" style="left:829px;top:705px;font-size:14px;line-height:16px;color:#111;width:186px;overflow:hidden;">Bleed The Freak</div><div class="a" style="left:1016px;top:703px;width:124px;height:21px;background:#ffffff;"></div><div class="a" style="left:1018px;top:705px;font-size:14px;line-height:16px;color:#111;width:122px;overflow:hidden;">7</div><div class="a" style="left:1031px;top:705px;font-size:14px;line-height:16px;color:#8c8c8c;width:109px;overflow:hidden;">Facelift</div><div class="a" style="left:1141px;top:703px;width:152px;height:21px;background:#ffffff;"></div><div class="a" style="left:1143px;top:705px;font-size:14px;line-height:16px;color:#111;width:150px;overflow:hidden;">1</div><div class="a" style="left:1156px;top:705px;font-size:14px;line-height:16px;color:#8c8c8c;width:137px;overflow:hidden;">MPEG audio file</div><div class="a" style="left:1294px;top:703px;width:121px;height:21px;background:#ffffff;"></div><div class="a" style="left:1296px;top:705px;font-size:14px;line-height:16px;color:#111;width:119px;overflow:hidden;">1</div><div class="a" style="left:1309px;top:705px;font-size:14px;line-height:16px;color:#8c8c8c;width:106px;overflow:hidden;">Rock</div><div class="a" style="left:1416px;top:703px;width:97px;height:21px;background:#ffffff;"></div><div class="a" style="left:1418px;top:705px;font-size:14px;line-height:16px;color:#111;width:95px;overflow:hidden;">Jerry Cantrell</div><div class="a" style="left:666px;top:724px;width:848px;height:23px;background:#c6c6c6;"></div><div class="a" style="left:667px;top:725px;width:40px;height:21px;background:#f5f6f8;"></div><div class="a" style="left:669px;top:727px;font-size:14px;line-height:16px;color:#111;width:38px;overflow:hidden;">5</div><div class="a" style="left:708px;top:725px;width:118px;height:21px;background:#ffffff;"></div><div class="a" style="left:710px;top:727px;font-size:14px;line-height:16px;color:#111;width:116px;overflow:hidden;">55</div><div class="a" style="left:827px;top:725px;width:188px;height:21px;background:#ffffff;"></div><div class="a" style="left:829px;top:727px;font-size:14px;line-height:16px;color:#111;width:186px;overflow:hidden;">I Can't Remember</div><div class="a" style="left:1016px;top:725px;width:124px;height:21px;background:#ffffff;"></div><div class="a" style="left:1018px;top:727px;font-size:14px;line-height:16px;color:#111;width:122px;overflow:hidden;">7</div><div class="a" style="left:1031px;top:727px;font-size:14px;line-height:16px;color:#8c8c8c;width:109px;overflow:hidden;">Facelift</div><div class="a" style="left:1141px;top:725px;width:152px;height:21px;background:#ffffff;"></div><div class="a" style="left:1143px;top:727px;font-size:14px;line-height:16px;color:#111;width:150px;overflow:hidden;">1</div><div class="a" style="left:1156px;top:727px;font-size:14px;line-height:16px;color:#8c8c8c;width:137px;overflow:hidden;">MPEG audio file</div><div class="a" style="left:1294px;top:725px;width:121px;height:21px;background:#ffffff;"></div><div class="a" style="left:1296px;top:727px;font-size:14px;line-height:16px;color:#111;width:119px;overflow:hidden;">1</div><div class="a" style="left:1309px;top:727px;font-size:14px;line-height:16px;color:#8c8c8c;width:106px;overflow:hidden;">Rock</div><div class="a" style="left:1416px;top:725px;width:97px;height:21px;background:#ffffff;"></div><div class="a" style="left:1418px;top:727px;font-size:14px;line-height:16px;color:#111;width:95px;overflow:hidden;">Jerry Cantrell, Layne Staley</div><div class="a" style="left:666px;top:746px;width:848px;height:23px;background:#c6c6c6;"></div><div class="a" style="left:667px;top:747px;width:40px;height:21px;background:#f5f6f8;"></div><div class="a" style="left:669px;top:749px;font-size:14px;line-height:16px;color:#111;width:38px;overflow:hidden;">6</div><div class="a" style="left:708px;top:747px;width:118px;height:21px;background:#e9f3fc;"></div><div class="a" style="left:710px;top:749px;font-size:14px;line-height:16px;color:#111;width:116px;overflow:hidden;">56</div><div class="a" style="left:827px;top:747px;width:188px;height:21px;background:#e9f3fc;"></div><div class="a" style="left:829px;top:749px;font-size:14px;line-height:16px;color:#111;width:186px;overflow:hidden;">Love, Hate, Love</div><div class="a" style="left:1016px;top:747px;width:124px;height:21px;background:#e9f3fc;"></div><div class="a" style="left:1018px;top:749px;font-size:14px;line-height:16px;color:#111;width:122px;overflow:hidden;">7</div><div class="a" style="left:1031px;top:749px;font-size:14px;line-height:16px;color:#8c8c8c;width:109px;overflow:hidden;">Facelift</div><div class="a" style="left:1141px;top:747px;width:152px;height:21px;background:#e9f3fc;"></div><div class="a" style="left:1143px;top:749px;font-size:14px;line-height:16px;color:#111;width:150px;overflow:hidden;">1</div><div class="a" style="left:1156px;top:749px;font-size:14px;line-height:16px;color:#8c8c8c;width:137px;overflow:hidden;">MPEG audio file</div><div class="a" style="left:1294px;top:747px;width:121px;height:21px;background:#e9f3fc;"></div><div class="a" style="left:1296px;top:749px;font-size:14px;line-height:16px;color:#111;width:119px;overflow:hidden;">1</div><div class="a" style="left:1309px;top:749px;font-size:14px;line-height:16px;color:#8c8c8c;width:106px;overflow:hidden;">Rock</div><div class="a" style="left:1416px;top:747px;width:97px;height:21px;background:#e9f3fc;"></div><div class="a" style="left:1418px;top:749px;font-size:14px;line-height:16px;color:#111;width:95px;overflow:hidden;">Jerry Cantrell, Layne Staley</div><div class="a" style="left:666px;top:768px;width:848px;height:23px;background:#c6c6c6;"></div><div class="a" style="left:667px;top:769px;width:40px;height:21px;background:#f5f6f8;"></div><div class="a" style="left:669px;top:771px;font-size:14px;line-height:16px;color:#111;width:38px;overflow:hidden;">7</div><div class="a" style="left:708px;top:769px;width:118px;height:21px;background:#ffffff;"></div><div class="a" style="left:710px;top:771px;font-size:14px;line-height:16px;color:#111;width:116px;overflow:hidden;">57</div><div class="a" style="left:827px;top:769px;width:188px;height:21px;background:#ffffff;"></div><div class="a" style="left:829px;top:771px;font-size:14px;line-height:16px;color:#111;width:186px;overflow:hidden;">It Ain't Like That</div><div class="a" style="left:1016px;top:769px;width:124px;height:21px;background:#ffffff;"></div><div class="a" style="left:1018px;top:771px;font-size:14px;line-height:16px;color:#111;width:122px;overflow:hidden;">7</div><div class="a" style="left:1031px;top:771px;font-size:14px;line-height:16px;color:#8c8c8c;width:109px;overflow:hidden;">Facelift</div><div class="a" style="left:1141px;top:769px;width:152px;height:21px;background:#ffffff;"></div><div class="a" style="left:1143px;top:771px;font-size:14px;line-height:16px;color:#111;width:150px;overflow:hidden;">1</div><div class="a" style="left:1156px;top:771px;font-size:14px;line-height:16px;color:#8c8c8c;width:137px;overflow:hidden;">MPEG audio file</div><div class="a" style="left:1294px;top:769px;width:121px;height:21px;background:#ffffff;"></div><div class="a" style="left:1296px;top:771px;font-size:14px;line-height:16px;color:#111;width:119px;overflow:hidden;">1</div><div class="a" style="left:1309px;top:771px;font-size:14px;line-height:16px;color:#8c8c8c;width:106px;overflow:hidden;">Rock</div><div class="a" style="left:1416px;top:769px;width:97px;height:21px;background:#ffffff;"></div><div class="a" style="left:1418px;top:771px;font-size:14px;line-height:16px;color:#111;width:95px;overflow:hidden;">Jerry Cantrell, Michael Starr, Sean Kinney</div><div class="a" style="left:666px;top:790px;width:848px;height:23px;background:#c6c6c6;"></div><div class="a" style="left:667px;top:791px;width:40px;height:21px;background:#f5f6f8;"></div><div class="a" style="left:669px;top:793px;font-size:14px;line-height:16px;color:#111;width:38px;overflow:hidden;">8</div><div class="a" style="left:708px;top:791px;width:118px;height:21px;background:#ffffff;"></div><div class="a" style="left:710px;top:793px;font-size:14px;line-height:16px;color:#111;width:116px;overflow:hidden;">58</div><div class="a" style="left:827px;top:791px;width:188px;height:21px;background:#ffffff;"></div><div class="a" style="left:829px;top:793px;font-size:14px;line-height:16px;color:#111;width:186px;overflow:hidden;">Sunshine</div><div class="a" style="left:1016px;top:791px;width:124px;height:21px;background:#ffffff;"></div><div class="a" style="left:1018px;top:793px;font-size:14px;line-height:16px;color:#111;width:122px;overflow:hidden;">7</div><div class="a" style="left:1031px;top:793px;font-size:14px;line-height:16px;color:#8c8c8c;width:109px;overflow:hidden;">Facelift</div><div class="a" style="left:1141px;top:791px;width:152px;height:21px;background:#ffffff;"></div><div class="a" style="left:1143px;top:793px;font-size:14px;line-height:16px;color:#111;width:150px;overflow:hidden;">1</div><div class="a" style="left:1156px;top:793px;font-size:14px;line-height:16px;color:#8c8c8c;width:137px;overflow:hidden;">MPEG audio file</div><div class="a" style="left:1294px;top:791px;width:121px;height:21px;background:#ffffff;"></div><div class="a" style="left:1296px;top:793px;font-size:14px;line-height:16px;color:#111;width:119px;overflow:hidden;">1</div><div class="a" style="left:1309px;top:793px;font-size:14px;line-height:16px;color:#8c8c8c;width:106px;overflow:hidden;">Rock</div><div class="a" style="left:1416px;top:791px;width:97px;height:21px;background:#ffffff;"></div><div class="a" style="left:1418px;top:793px;font-size:14px;line-height:16px;color:#111;width:95px;overflow:hidden;">Jerry Cantrell</div><div class="a" style="left:666px;top:812px;width:848px;height:23px;background:#c6c6c6;"></div><div class="a" style="left:667px;top:813px;width:40px;height:21px;background:#f5f6f8;"></div><div class="a" style="left:669px;top:815px;font-size:14px;line-height:16px;color:#111;width:38px;overflow:hidden;">9</div><div class="a" style="left:708px;top:813px;width:118px;height:21px;background:#ebebeb;"></div><div class="a" style="left:710px;top:815px;font-size:14px;line-height:16px;color:#111;width:116px;overflow:hidden;">59</div><div class="a" style="left:827px;top:813px;width:188px;height:21px;background:#ebebeb;"></div><div class="a" style="left:829px;top:815px;font-size:14px;line-height:16px;color:#111;width:186px;overflow:hidden;">Put You Down</div><div class="a" style="left:1016px;top:813px;width:124px;height:21px;background:#ebebeb;"></div><div class="a" style="left:1018px;top:815px;font-size:14px;line-height:16px;color:#111;width:122px;overflow:hidden;">7</div><div class="a" style="left:1031px;top:815px;font-size:14px;line-height:16px;color:#8c8c8c;width:109px;overflow:hidden;">Facelift</div><div class="a" style="left:1141px;top:813px;width:152px;height:21px;background:#ebebeb;"></div><div class="a" style="left:1143px;top:815px;font-size:14px;line-height:16px;color:#111;width:150px;overflow:hidden;">1</div><div class="a" style="left:1156px;top:815px;font-size:14px;line-height:16px;color:#8c8c8c;width:137px;overflow:hidden;">MPEG audio file</div><div class="a" style="left:1294px;top:813px;width:121px;height:21px;background:#ebebeb;"></div><div class="a" style="left:1296px;top:815px;font-size:14px;line-height:16px;color:#111;width:119px;overflow:hidden;">1</div><div class="a" style="left:1309px;top:815px;font-size:14px;line-height:16px;color:#8c8c8c;width:106px;overflow:hidden;">Rock</div><div class="a" style="left:1416px;top:813px;width:97px;height:21px;background:#ebebeb;"></div><div class="a" style="left:1418px;top:815px;font-size:14px;line-height:16px;color:#111;width:95px;overflow:hidden;">Jerry Cantrell</div><div class="a" style="left:666px;top:834px;width:848px;height:23px;background:#c6c6c6;"></div><div class="a" style="left:667px;top:835px;width:40px;height:21px;background:#f5f6f8;"></div><div class="a" style="left:669px;top:837px;font-size:14px;line-height:16px;color:#111;width:38px;overflow:hidden;">10</div><div class="a" style="left:708px;top:835px;width:118px;height:21px;background:#ffffff;"></div><div class="a" style="left:710px;top:837px;font-size:14px;line-height:16px;color:#111;width:116px;overflow:hidden;">60</div><div class="a" style="left:827px;top:835px;width:188px;height:21px;background:#ffffff;"></div><div class="a" style="left:829px;top:837px;font-size:14px;line-height:16px;color:#111;width:186px;overflow:hidden;">Confusion</div><div class="a" style="left:1016px;top:835px;width:124px;height:21px;background:#ffffff;"></div><div class="a" style="left:1018px;top:837px;font-size:14px;line-height:16px;color:#111;width:122px;overflow:hidden;">7</div><div class="a" style="left:1031px;top:837px;font-size:14px;line-height:16px;color:#8c8c8c;width:109px;overflow:hidden;">Facelift</div><div class="a" style="left:1141px;top:835px;width:152px;height:21px;background:#ffffff;"></div><div class="a" style="left:1143px;top:837px;font-size:14px;line-height:16px;color:#111;width:150px;overflow:hidden;">1</div><div class="a" style="left:1156px;top:837px;font-size:14px;line-height:16px;color:#8c8c8c;width:137px;overflow:hidden;">MPEG audio file</div><div class="a" style="left:1294px;top:835px;width:121px;height:21px;background:#ffffff;"></div><div class="a" style="left:1296px;top:837px;font-size:14px;line-height:16px;color:#111;width:119px;overflow:hidden;">1</div><div class="a" style="left:1309px;top:837px;font-size:14px;line-height:16px;color:#8c8c8c;width:106px;overflow:hidden;">Rock</div><div class="a" style="left:1416px;top:835px;width:97px;height:21px;background:#ffffff;"></div><div class="a" style="left:1418px;top:837px;font-size:14px;line-height:16px;color:#111;width:95px;overflow:hidden;">Jerry Cantrell, Michael Starr, Layne Staley</div><div class="a" style="left:666px;top:856px;width:848px;height:23px;background:#c6c6c6;"></div><div class="a" style="left:667px;top:857px;width:40px;height:21px;background:#f5f6f8;"></div><div class="a" style="left:669px;top:859px;font-size:14px;line-height:16px;color:#111;width:38px;overflow:hidden;">11</div><div class="a" style="left:708px;top:857px;width:118px;height:21px;background:#ffffff;"></div><div class="a" style="left:710px;top:859px;font-size:14px;line-height:16px;color:#111;width:116px;overflow:hidden;">61</div><div class="a" style="left:827px;top:857px;width:188px;height:21px;background:#ffffff;"></div><div class="a" style="left:829px;top:859px;font-size:14px;line-height:16px;color:#111;width:186px;overflow:hidden;">I Know Somethin (Bout You)</div><div class="a" style="left:1016px;top:857px;width:124px;height:21px;background:#ffffff;"></div><div class="a" style="left:1018px;top:859px;font-size:14px;line-height:16px;color:#111;width:122px;overflow:hidden;">7</div><div class="a" style="left:1031px;top:859px;font-size:14px;line-height:16px;color:#8c8c8c;width:109px;overflow:hidden;">Facelift</div><div class="a" style="left:1141px;top:857px;width:152px;height:21px;background:#ffffff;"></div><div class="a" style="left:1143px;top:859px;font-size:14px;line-height:16px;color:#111;width:150px;overflow:hidden;">1</div><div class="a" style="left:1156px;top:859px;font-size:14px;line-height:16px;color:#8c8c8c;width:137px;overflow:hidden;">MPEG audio file</div><div class="a" style="left:1294px;top:857px;width:121px;height:21px;background:#ffffff;"></div><div class="a" style="left:1296px;top:859px;font-size:14px;line-height:16px;color:#111;width:119px;overflow:hidden;">1</div><div class="a" style="left:1309px;top:859px;font-size:14px;line-height:16px;color:#8c8c8c;width:106px;overflow:hidden;">Rock</div><div class="a" style="left:1416px;top:857px;width:97px;height:21px;background:#ffffff;"></div><div class="a" style="left:1418px;top:859px;font-size:14px;line-height:16px;color:#111;width:95px;overflow:hidden;">Jerry Cantrell</div><div class="a" style="left:666px;top:878px;width:848px;height:23px;background:#c6c6c6;"></div><div class="a" style="left:667px;top:879px;width:40px;height:21px;background:#f5f6f8;"></div><div class="a" style="left:669px;top:881px;font-size:14px;line-height:16px;color:#111;width:38px;overflow:hidden;">12</div><div class="a" style="left:708px;top:879px;width:118px;height:21px;background:#e9f3fc;"></div><div class="a" style="left:710px;top:881px;font-size:14px;line-height:16px;color:#111;width:116px;overflow:hidden;">62</div><div class="a" style="left:827px;top:879px;width:188px;height:21px;background:#e9f3fc;"></div><div class="a" style="left:829px;top:881px;font-size:14px;line-height:16px;color:#111;width:186px;overflow:hidden;">Real Thing</div><div class="a" style="left:1016px;top:879px;width:124px;height:21px;background:#e9f3fc;"></div><div class="a" style="left:1018px;top:881px;font-size:14px;line-height:16px;color:#111;width:122px;overflow:hidden;">7</div><div class="a" style="left:1031px;top:881px;font-size:14px;line-height:16px;color:#8c8c8c;width:109px;overflow:hidden;">Facelift</div><div class="a" style="left:1141px;top:879px;width:152px;height:21px;background:#e9f3fc;"></div><div class="a" style="left:1143px;top:881px;font-size:14px;line-height:16px;color:#111;width:150px;overflow:hidden;">1</div><div class="a" style="left:1156px;top:881px;font-size:14px;line-height:16px;color:#8c8c8c;width:137px;overflow:hidden;">MPEG audio file</div><div class="a" style="left:1294px;top:879px;width:121px;height:21px;background:#e9f3fc;"></div><div class="a" style="left:1296px;top:881px;font-size:14px;line-height:16px;color:#111;width:119px;overflow:hidden;">1</div><div class="a" style="left:1309px;top:881px;font-size:14px;line-height:16px;color:#8c8c8c;width:106px;overflow:hidden;">Rock</div><div class="a" style="left:1416px;top:879px;width:97px;height:21px;background:#e9f3fc;"></div><div class="a" style="left:1418px;top:881px;font-size:14px;line-height:16px;color:#111;width:95px;overflow:hidden;">Jerry Cantrell, Layne Staley</div><div class="a" style="left:1513px;top:592px;width:15px;height:368px;background:#f0f0f0;"></div><svg class="a" style="left:1516.5px;top:598px;" width="8" height="5" viewBox="0 0 8 5"><path d="M0,4.5 L4,0 L8,4.5 Z" fill="#a3a3a3"/></svg><svg class="a" style="left:1516.5px;top:948px;" width="8" height="5" viewBox="0 0 8 5"><path d="M0,0 L8,0 L4,4.5 Z" fill="#a3a3a3"/></svg><div class="a" style="left:666px;top:960px;width:847px;height:15px;background:#f0f0f0;"></div><svg class="a" style="left:671px;top:963.5px;" width="5" height="8" viewBox="0 0 5 8"><path d="M4.5,0 V8 L0,4 Z" fill="#a3a3a3"/></svg><svg class="a" style="left:1503px;top:963.5px;" width="5" height="8" viewBox="0 0 5 8"><path d="M0,0 V8 L4.5,4 Z" fill="#5e5e5e"/></svg><div class="a" style="left:681px;top:962px;width:478px;height:11px;background:#c1c1c1;"></div><div class="a" style="left:1513px;top:960px;width:15px;height:15px;background:#dcdcdc;"></div><div class="a" style="left:1432px;top:939px;width:56px;height:16px;background:#fafad2;"></div><div class="a" style="left:1432px;top:939px;font-size:14px;line-height:16px;color:#111;letter-spacing:-0.3px;">Rows: 12</div><div class="a" style="left:363px;top:138px;width:300px;height:26px;background:#808080;"></div><div class="a" style="left:368px;top:143px;font-size:14px;line-height:16px;font-weight:bold;color:#000;letter-spacing:-0.4px;">COLUMNS</div><div class="a" style="left:363px;top:164px;width:229px;height:21px;background:#fff;box-sizing:border-box;border:1px solid #b9b9b9;border-top-color:#9a9a9a;border-left-color:#9a9a9a;"></div><div class="a" style="left:365px;top:167px;font-size:13.333px;line-height:15px;color:#767676;">Search columns</div><div class="a" style="left:592px;top:164px;width:34px;height:21px;background:linear-gradient(#efefef,#e4e2e4 45%,#c5bcc5);box-sizing:border-box;border:1px solid #c9c9c9;border-right-color:#b5b5b5;border-bottom-color:#b0a8b0;"></div><div class="a" style="left:596px;top:167px;font-size:13px;line-height:15px;color:#111;letter-spacing:-0.5px;">Hide</div><div class="a" style="left:626px;top:164px;width:37px;height:21px;background:linear-gradient(#efefef,#e4e2e4 45%,#c5bcc5);box-sizing:border-box;border:1px solid #c9c9c9;border-right-color:#b5b5b5;border-bottom-color:#b0a8b0;"></div><div class="a" style="left:629px;top:167px;font-size:13px;line-height:15px;color:#111;letter-spacing:-0.5px;">Show</div><svg class="a" style="left:385px;top:194px;" width="12" height="12" viewBox="0 0 12 12"><rect x="0.5" y="0.5" width="11" height="11" rx="2" fill="#eee" stroke="#a0a0a0" stroke-width="1"/><rect x="1.2" y="1.2" width="9.6" height="9.6" rx="1.5" fill="none" stroke="#fff" stroke-width="0.6"/><path d="M2.6,6.2 L4.7,8.5 L9.2,2.8" fill="none" stroke="#444" stroke-width="2.1"/></svg><svg class="a" style="left:401px;top:195px;" width="12" height="12" viewBox="0 0 12 12"><defs><clipPath id="pkl"><rect x="0" y="0" width="6" height="12"/></clipPath><clipPath id="pkr"><rect x="6" y="0" width="6" height="12"/></clipPath></defs><g fill="#6edbfa" clip-path="url(#pkl)"><rect x="2" y="0" width="2.8" height="12" rx="1.4"/><rect x="7.2" y="0" width="2.8" height="12" rx="1.4"/><rect x="0" y="2.1" width="12" height="2.8" rx="1.4"/><rect x="0" y="7.1" width="12" height="2.8" rx="1.4"/><circle cx="3.4" cy="3.5" r="1.9"/><circle cx="8.6" cy="3.5" r="1.9"/><circle cx="3.4" cy="8.5" r="1.9"/><circle cx="8.6" cy="8.5" r="1.9"/></g><g fill="#0dc7f8" clip-path="url(#pkr)"><rect x="2" y="0" width="2.8" height="12" rx="1.4"/><rect x="7.2" y="0" width="2.8" height="12" rx="1.4"/><rect x="0" y="2.1" width="12" height="2.8" rx="1.4"/><rect x="0" y="7.1" width="12" height="2.8" rx="1.4"/><circle cx="3.4" cy="3.5" r="1.9"/><circle cx="8.6" cy="3.5" r="1.9"/><circle cx="3.4" cy="8.5" r="1.9"/><circle cx="8.6" cy="8.5" r="1.9"/></g><rect x="4.9" y="5" width="2.2" height="2" fill="#fff"/></svg><div class="a" style="left:417px;top:193px;font-size:14px;line-height:16px;color:#111;">AlbumId</div><svg class="a" style="left:385px;top:213px;" width="12" height="12" viewBox="0 0 12 12"><rect x="0.5" y="0.5" width="11" height="11" rx="2" fill="#eee" stroke="#a0a0a0" stroke-width="1"/><rect x="1.2" y="1.2" width="9.6" height="9.6" rx="1.5" fill="none" stroke="#fff" stroke-width="0.6"/><path d="M2.6,6.2 L4.7,8.5 L9.2,2.8" fill="none" stroke="#444" stroke-width="2.1"/></svg><div class="a" style="left:405px;top:212px;font-size:14px;line-height:16px;color:#111;">Title</div><svg class="a" style="left:368px;top:233px;" width="12" height="12" viewBox="0 0 12 12"><rect x="0.7" y="0.7" width="10.6" height="10.6" rx="1.6" fill="none" stroke="#111" stroke-width="1.4"/><path d="M2.8,5.5 H9.2" stroke="#111" stroke-width="1.2"/></svg><svg class="a" style="left:385px;top:232px;" width="12" height="12" viewBox="0 0 12 12"><rect x="0.5" y="0.5" width="11" height="11" rx="2" fill="#eee" stroke="#a0a0a0" stroke-width="1"/><rect x="1.2" y="1.2" width="9.6" height="9.6" rx="1.5" fill="none" stroke="#fff" stroke-width="0.6"/><path d="M2.6,6.2 L4.7,8.5 L9.2,2.8" fill="none" stroke="#444" stroke-width="2.1"/></svg><svg class="a" style="left:401px;top:233px;" width="12" height="12" viewBox="0 0 12 12"><circle cx="8.6" cy="3.4" r="3.4" fill="#9ba3ad"/><circle cx="9.3" cy="2.6" r="1.15" fill="#fff"/><path d="M6.2,6 L1.3,10.9" stroke="#aab3bf" stroke-width="2.7" stroke-linecap="round"/><path d="M4.6,8.2 L6.2,9.6" stroke="#a3abb6" stroke-width="1.6"/></svg><div class="a" style="left:417px;top:231px;font-size:14px;line-height:16px;color:#111;">ArtistId</div><svg class="a" style="left:395px;top:251px;" width="12" height="12" viewBox="0 0 12 12"><rect x="0.5" y="0.5" width="11" height="11" rx="2" fill="#eee" stroke="#a0a0a0" stroke-width="1"/><rect x="1.2" y="1.2" width="9.6" height="9.6" rx="1.5" fill="none" stroke="#fff" stroke-width="0.6"/></svg><svg class="a" style="left:411px;top:252px;" width="12" height="12" viewBox="0 0 12 12"><defs><clipPath id="pkl"><rect x="0" y="0" width="6" height="12"/></clipPath><clipPath id="pkr"><rect x="6" y="0" width="6" height="12"/></clipPath></defs><g fill="#6edbfa" clip-path="url(#pkl)"><rect x="2" y="0" width="2.8" height="12" rx="1.4"/><rect x="7.2" y="0" width="2.8" height="12" rx="1.4"/><rect x="0" y="2.1" width="12" height="2.8" rx="1.4"/><rect x="0" y="7.1" width="12" height="2.8" rx="1.4"/><circle cx="3.4" cy="3.5" r="1.9"/><circle cx="8.6" cy="3.5" r="1.9"/><circle cx="3.4" cy="8.5" r="1.9"/><circle cx="8.6" cy="8.5" r="1.9"/></g><g fill="#0dc7f8" clip-path="url(#pkr)"><rect x="2" y="0" width="2.8" height="12" rx="1.4"/><rect x="7.2" y="0" width="2.8" height="12" rx="1.4"/><rect x="0" y="2.1" width="12" height="2.8" rx="1.4"/><rect x="0" y="7.1" width="12" height="2.8" rx="1.4"/><circle cx="3.4" cy="3.5" r="1.9"/><circle cx="8.6" cy="3.5" r="1.9"/><circle cx="3.4" cy="8.5" r="1.9"/><circle cx="8.6" cy="8.5" r="1.9"/></g><rect x="4.9" y="5" width="2.2" height="2" fill="#fff"/></svg><div class="a" style="left:427px;top:250px;font-size:14px;line-height:16px;color:#111;">Artist.ArtistId</div><svg class="a" style="left:395px;top:270px;" width="12" height="12" viewBox="0 0 12 12"><rect x="0.5" y="0.5" width="11" height="11" rx="2" fill="#eee" stroke="#a0a0a0" stroke-width="1"/><rect x="1.2" y="1.2" width="9.6" height="9.6" rx="1.5" fill="none" stroke="#fff" stroke-width="0.6"/><path d="M2.6,6.2 L4.7,8.5 L9.2,2.8" fill="none" stroke="#444" stroke-width="2.1"/></svg><div class="a" style="left:415px;top:269px;font-size:14px;line-height:16px;color:#111;">Artist.Name</div><div class="a" style="left:363px;top:592px;width:300px;height:26px;background:#808080;"></div><div class="a" style="left:368px;top:597px;font-size:14px;line-height:16px;font-weight:bold;color:#000;letter-spacing:-0.4px;">COLUMNS</div><div class="a" style="left:363px;top:618px;width:229px;height:21px;background:#fff;box-sizing:border-box;border:1px solid #b9b9b9;border-top-color:#9a9a9a;border-left-color:#9a9a9a;"></div><div class="a" style="left:365px;top:621px;font-size:13.333px;line-height:15px;color:#767676;">Search columns</div><div class="a" style="left:592px;top:618px;width:34px;height:21px;background:linear-gradient(#efefef,#e4e2e4 45%,#c5bcc5);box-sizing:border-box;border:1px solid #c9c9c9;border-right-color:#b5b5b5;border-bottom-color:#b0a8b0;"></div><div class="a" style="left:596px;top:621px;font-size:13px;line-height:15px;color:#111;letter-spacing:-0.5px;">Hide</div><div class="a" style="left:626px;top:618px;width:37px;height:21px;background:linear-gradient(#efefef,#e4e2e4 45%,#c5bcc5);box-sizing:border-box;border:1px solid #c9c9c9;border-right-color:#b5b5b5;border-bottom-color:#b0a8b0;"></div><div class="a" style="left:629px;top:621px;font-size:13px;line-height:15px;color:#111;letter-spacing:-0.5px;">Show</div><svg class="a" style="left:385px;top:648px;" width="12" height="12" viewBox="0 0 12 12"><rect x="0.5" y="0.5" width="11" height="11" rx="2" fill="#eee" stroke="#a0a0a0" stroke-width="1"/><rect x="1.2" y="1.2" width="9.6" height="9.6" rx="1.5" fill="none" stroke="#fff" stroke-width="0.6"/><path d="M2.6,6.2 L4.7,8.5 L9.2,2.8" fill="none" stroke="#444" stroke-width="2.1"/></svg><svg class="a" style="left:401px;top:649px;" width="12" height="12" viewBox="0 0 12 12"><defs><clipPath id="pkl"><rect x="0" y="0" width="6" height="12"/></clipPath><clipPath id="pkr"><rect x="6" y="0" width="6" height="12"/></clipPath></defs><g fill="#6edbfa" clip-path="url(#pkl)"><rect x="2" y="0" width="2.8" height="12" rx="1.4"/><rect x="7.2" y="0" width="2.8" height="12" rx="1.4"/><rect x="0" y="2.1" width="12" height="2.8" rx="1.4"/><rect x="0" y="7.1" width="12" height="2.8" rx="1.4"/><circle cx="3.4" cy="3.5" r="1.9"/><circle cx="8.6" cy="3.5" r="1.9"/><circle cx="3.4" cy="8.5" r="1.9"/><circle cx="8.6" cy="8.5" r="1.9"/></g><g fill="#0dc7f8" clip-path="url(#pkr)"><rect x="2" y="0" width="2.8" height="12" rx="1.4"/><rect x="7.2" y="0" width="2.8" height="12" rx="1.4"/><rect x="0" y="2.1" width="12" height="2.8" rx="1.4"/><rect x="0" y="7.1" width="12" height="2.8" rx="1.4"/><circle cx="3.4" cy="3.5" r="1.9"/><circle cx="8.6" cy="3.5" r="1.9"/><circle cx="3.4" cy="8.5" r="1.9"/><circle cx="8.6" cy="8.5" r="1.9"/></g><rect x="4.9" y="5" width="2.2" height="2" fill="#fff"/></svg><div class="a" style="left:417px;top:647px;font-size:14px;line-height:16px;color:#111;">TrackId</div><svg class="a" style="left:385px;top:667px;" width="12" height="12" viewBox="0 0 12 12"><rect x="0.5" y="0.5" width="11" height="11" rx="2" fill="#eee" stroke="#a0a0a0" stroke-width="1"/><rect x="1.2" y="1.2" width="9.6" height="9.6" rx="1.5" fill="none" stroke="#fff" stroke-width="0.6"/><path d="M2.6,6.2 L4.7,8.5 L9.2,2.8" fill="none" stroke="#444" stroke-width="2.1"/></svg><div class="a" style="left:405px;top:666px;font-size:14px;line-height:16px;color:#111;">Name</div><svg class="a" style="left:368px;top:687px;" width="12" height="12" viewBox="0 0 12 12"><rect x="0.7" y="0.7" width="10.6" height="10.6" rx="1.6" fill="none" stroke="#111" stroke-width="1.4"/><path d="M2.8,5.5 H9.2" stroke="#111" stroke-width="1.2"/><path d="M5.5,2.5 V8.8" stroke="#111" stroke-width="1.2"/></svg><svg class="a" style="left:385px;top:686px;" width="12" height="12" viewBox="0 0 12 12"><rect x="0.5" y="0.5" width="11" height="11" rx="2" fill="#eee" stroke="#a0a0a0" stroke-width="1"/><rect x="1.2" y="1.2" width="9.6" height="9.6" rx="1.5" fill="none" stroke="#fff" stroke-width="0.6"/><path d="M2.6,6.2 L4.7,8.5 L9.2,2.8" fill="none" stroke="#444" stroke-width="2.1"/></svg><svg class="a" style="left:401px;top:687px;" width="12" height="12" viewBox="0 0 12 12"><circle cx="8.6" cy="3.4" r="3.4" fill="#9ba3ad"/><circle cx="9.3" cy="2.6" r="1.15" fill="#fff"/><path d="M6.2,6 L1.3,10.9" stroke="#aab3bf" stroke-width="2.7" stroke-linecap="round"/><path d="M4.6,8.2 L6.2,9.6" stroke="#a3abb6" stroke-width="1.6"/></svg><div class="a" style="left:417px;top:685px;font-size:14px;line-height:16px;color:#111;">AlbumId</div><svg class="a" style="left:368px;top:706px;" width="12" height="12" viewBox="0 0 12 12"><rect x="0.7" y="0.7" width="10.6" height="10.6" rx="1.6" fill="none" stroke="#111" stroke-width="1.4"/><path d="M2.8,5.5 H9.2" stroke="#111" stroke-width="1.2"/><path d="M5.5,2.5 V8.8" stroke="#111" stroke-width="1.2"/></svg><svg class="a" style="left:385px;top:705px;" width="12" height="12" viewBox="0 0 12 12"><rect x="0.5" y="0.5" width="11" height="11" rx="2" fill="#eee" stroke="#a0a0a0" stroke-width="1"/><rect x="1.2" y="1.2" width="9.6" height="9.6" rx="1.5" fill="none" stroke="#fff" stroke-width="0.6"/><path d="M2.6,6.2 L4.7,8.5 L9.2,2.8" fill="none" stroke="#444" stroke-width="2.1"/></svg><svg class="a" style="left:401px;top:706px;" width="12" height="12" viewBox="0 0 12 12"><circle cx="8.6" cy="3.4" r="3.4" fill="#9ba3ad"/><circle cx="9.3" cy="2.6" r="1.15" fill="#fff"/><path d="M6.2,6 L1.3,10.9" stroke="#aab3bf" stroke-width="2.7" stroke-linecap="round"/><path d="M4.6,8.2 L6.2,9.6" stroke="#a3abb6" stroke-width="1.6"/></svg><div class="a" style="left:417px;top:704px;font-size:14px;line-height:16px;color:#111;">MediaTypeId</div><svg class="a" style="left:368px;top:725px;" width="12" height="12" viewBox="0 0 12 12"><rect x="0.7" y="0.7" width="10.6" height="10.6" rx="1.6" fill="none" stroke="#111" stroke-width="1.4"/><path d="M2.8,5.5 H9.2" stroke="#111" stroke-width="1.2"/><path d="M5.5,2.5 V8.8" stroke="#111" stroke-width="1.2"/></svg><svg class="a" style="left:385px;top:724px;" width="12" height="12" viewBox="0 0 12 12"><rect x="0.5" y="0.5" width="11" height="11" rx="2" fill="#eee" stroke="#a0a0a0" stroke-width="1"/><rect x="1.2" y="1.2" width="9.6" height="9.6" rx="1.5" fill="none" stroke="#fff" stroke-width="0.6"/><path d="M2.6,6.2 L4.7,8.5 L9.2,2.8" fill="none" stroke="#444" stroke-width="2.1"/></svg><svg class="a" style="left:401px;top:725px;" width="12" height="12" viewBox="0 0 12 12"><circle cx="8.6" cy="3.4" r="3.4" fill="#9ba3ad"/><circle cx="9.3" cy="2.6" r="1.15" fill="#fff"/><path d="M6.2,6 L1.3,10.9" stroke="#aab3bf" stroke-width="2.7" stroke-linecap="round"/><path d="M4.6,8.2 L6.2,9.6" stroke="#a3abb6" stroke-width="1.6"/></svg><div class="a" style="left:417px;top:723px;font-size:14px;line-height:16px;color:#111;">GenreId</div><svg class="a" style="left:385px;top:743px;" width="12" height="12" viewBox="0 0 12 12"><rect x="0.5" y="0.5" width="11" height="11" rx="2" fill="#eee" stroke="#a0a0a0" stroke-width="1"/><rect x="1.2" y="1.2" width="9.6" height="9.6" rx="1.5" fill="none" stroke="#fff" stroke-width="0.6"/><path d="M2.6,6.2 L4.7,8.5 L9.2,2.8" fill="none" stroke="#444" stroke-width="2.1"/></svg><div class="a" style="left:405px;top:742px;font-size:14px;line-height:16px;color:#111;">Composer</div><svg class="a" style="left:385px;top:762px;" width="12" height="12" viewBox="0 0 12 12"><rect x="0.5" y="0.5" width="11" height="11" rx="2" fill="#eee" stroke="#a0a0a0" stroke-width="1"/><rect x="1.2" y="1.2" width="9.6" height="9.6" rx="1.5" fill="none" stroke="#fff" stroke-width="0.6"/><path d="M2.6,6.2 L4.7,8.5 L9.2,2.8" fill="none" stroke="#444" stroke-width="2.1"/></svg><div class="a" style="left:405px;top:761px;font-size:14px;line-height:16px;color:#111;">Milliseconds</div><svg class="a" style="left:385px;top:781px;" width="12" height="12" viewBox="0 0 12 12"><rect x="0.5" y="0.5" width="11" height="11" rx="2" fill="#eee" stroke="#a0a0a0" stroke-width="1"/><rect x="1.2" y="1.2" width="9.6" height="9.6" rx="1.5" fill="none" stroke="#fff" stroke-width="0.6"/><path d="M2.6,6.2 L4.7,8.5 L9.2,2.8" fill="none" stroke="#444" stroke-width="2.1"/></svg><div class="a" style="left:405px;top:780px;font-size:14px;line-height:16px;color:#111;">Bytes</div><svg class="a" style="left:385px;top:800px;" width="12" height="12" viewBox="0 0 12 12"><rect x="0.5" y="0.5" width="11" height="11" rx="2" fill="#eee" stroke="#a0a0a0" stroke-width="1"/><rect x="1.2" y="1.2" width="9.6" height="9.6" rx="1.5" fill="none" stroke="#fff" stroke-width="0.6"/><path d="M2.6,6.2 L4.7,8.5 L9.2,2.8" fill="none" stroke="#444" stroke-width="2.1"/></svg><div class="a" style="left:405px;top:799px;font-size:14px;line-height:16px;color:#111;">UnitPrice</div><div class="a" style="left:363px;top:389px;width:300px;height:26px;background:#808080;"></div><div class="a" style="left:368px;top:394px;font-size:14px;line-height:16px;font-weight:bold;color:#000;letter-spacing:-0.75px;">REFERENCES</div><div class="a" style="left:363px;top:415px;width:300px;height:21px;background:#fff;box-sizing:border-box;border:1px solid #b9b9b9;border-top-color:#9a9a9a;border-left-color:#9a9a9a;"></div><div class="a" style="left:365px;top:418px;font-size:13.333px;line-height:15px;color:#767676;">Search references</div><div class="a" style="left:364px;top:441px;font-size:14px;line-height:16px;font-weight:bold;color:#111;">References tables (1)</div><svg class="a" style="left:368px;top:462px;" width="16" height="16" viewBox="0 0 16 16"><g transform="rotate(-45 8 8)" fill="none" stroke="#5bbfd0" stroke-width="1.6"><rect x="0.8" y="5.2" width="7.4" height="5.6" rx="2.8"/><rect x="7.8" y="5.2" width="7.4" height="5.6" rx="2.8"/><path d="M5.5,8 H10.5" stroke="#34606a" stroke-width="1"/></g></svg><div class="a" style="left:389px;top:462px;font-size:14px;line-height:16px;color:#3a7fc0;">Artist (ArtistId)</div><div class="a" style="left:364px;top:483px;font-size:14px;line-height:16px;font-weight:bold;color:#111;">Dependend tables (1)</div><svg class="a" style="left:368px;top:504px;" width="16" height="16" viewBox="0 0 16 16"><g stroke="#e0607a" stroke-width="1"><path d="M2.5,2.5 L8,4.5 L12.5,1.5 M8,4.5 L12.5,5.5 M2.5,2.5 L2.5,9 L1,14 M2.5,9 L4.5,14 M5.5,7 L7.5,11 L10,8 M7.5,11 L11.5,12.5"/></g><g fill="#9ad4f7" stroke="#111" stroke-width="0.9"><circle cx="2.5" cy="2.5" r="2"/><circle cx="8" cy="4.5" r="1.6"/><circle cx="2.5" cy="9" r="1.6"/><circle cx="7.5" cy="11" r="1.6"/><circle cx="12.5" cy="12.5" r="2"/></g><g fill="#111"><circle cx="12.8" cy="1.5" r="1"/><circle cx="12.8" cy="5.5" r="1"/><circle cx="5.5" cy="7" r="1"/><circle cx="10" cy="8" r="1"/><circle cx="1" cy="14.5" r="1"/><circle cx="4.5" cy="14.5" r="1"/></g></svg><div class="a" style="left:389px;top:504px;font-size:14px;line-height:16px;color:#3a7fc0;">Track (AlbumId)</div><div class="a" style="left:363px;top:822px;width:300px;height:26px;background:#808080;"></div><div class="a" style="left:368px;top:827px;font-size:14px;line-height:16px;font-weight:bold;color:#000;letter-spacing:-0.75px;">REFERENCES</div><div class="a" style="left:363px;top:848px;width:300px;height:21px;background:#fff;box-sizing:border-box;border:1px solid #b9b9b9;border-top-color:#9a9a9a;border-left-color:#9a9a9a;"></div><div class="a" style="left:365px;top:851px;font-size:13.333px;line-height:15px;color:#767676;">Search references</div><div class="a" style="left:364px;top:874px;font-size:14px;line-height:16px;font-weight:bold;color:#111;">References tables (3)</div><svg class="a" style="left:368px;top:895px;" width="16" height="16" viewBox="0 0 16 16"><g transform="rotate(-45 8 8)" fill="none" stroke="#5bbfd0" stroke-width="1.6"><rect x="0.8" y="5.2" width="7.4" height="5.6" rx="2.8"/><rect x="7.8" y="5.2" width="7.4" height="5.6" rx="2.8"/><path d="M5.5,8 H10.5" stroke="#34606a" stroke-width="1"/></g></svg><div class="a" style="left:389px;top:895px;font-size:14px;line-height:16px;color:#3a7fc0;">MediaType (MediaTypeId)</div><svg class="a" style="left:368px;top:916px;" width="16" height="16" viewBox="0 0 16 16"><g transform="rotate(-45 8 8)" fill="none" stroke="#5bbfd0" stroke-width="1.6"><rect x="0.8" y="5.2" width="7.4" height="5.6" rx="2.8"/><rect x="7.8" y="5.2" width="7.4" height="5.6" rx="2.8"/><path d="M5.5,8 H10.5" stroke="#34606a" stroke-width="1"/></g></svg><div class="a" style="left:389px;top:916px;font-size:14px;line-height:16px;color:#3a7fc0;">Genre (GenreId)</div><svg class="a" style="left:368px;top:937px;" width="16" height="16" viewBox="0 0 16 16"><g transform="rotate(-45 8 8)" fill="none" stroke="#5bbfd0" stroke-width="1.6"><rect x="0.8" y="5.2" width="7.4" height="5.6" rx="2.8"/><rect x="7.8" y="5.2" width="7.4" height="5.6" rx="2.8"/><path d="M5.5,8 H10.5" stroke="#34606a" stroke-width="1"/></g></svg><div class="a" style="left:389px;top:937px;font-size:14px;line-height:16px;color:#3a7fc0;">Album (AlbumId)</div><div class="a" style="left:364px;top:958px;font-size:14px;line-height:16px;font-weight:bold;color:#111;">Dependend tables (2)</div><svg class="a" style="left:368px;top:979px;" width="16" height="16" viewBox="0 0 16 16"><g stroke="#e0607a" stroke-width="1"><path d="M2.5,2.5 L8,4.5 L12.5,1.5 M8,4.5 L12.5,5.5 M2.5,2.5 L2.5,9 L1,14 M2.5,9 L4.5,14 M5.5,7 L7.5,11 L10,8 M7.5,11 L11.5,12.5"/></g><g fill="#9ad4f7" stroke="#111" stroke-width="0.9"><circle cx="2.5" cy="2.5" r="2"/><circle cx="8" cy="4.5" r="1.6"/><circle cx="2.5" cy="9" r="1.6"/><circle cx="7.5" cy="11" r="1.6"/><circle cx="12.5" cy="12.5" r="2"/></g><g fill="#111"><circle cx="12.8" cy="1.5" r="1"/><circle cx="12.8" cy="5.5" r="1"/><circle cx="5.5" cy="7" r="1"/><circle cx="10" cy="8" r="1"/><circle cx="1" cy="14.5" r="1"/><circle cx="4.5" cy="14.5" r="1"/></g></svg><div class="a" style="left:389px;top:979px;font-size:14px;line-height:16px;color:#3a7fc0;">Track (AlbumId)</div><svg class="a" style="left:368px;top:1000px;" width="16" height="16" viewBox="0 0 16 16"><g stroke="#e0607a" stroke-width="1"><path d="M2.5,2.5 L8,4.5 L12.5,1.5 M8,4.5 L12.5,5.5 M2.5,2.5 L2.5,9 L1,14 M2.5,9 L4.5,14 M5.5,7 L7.5,11 L10,8 M7.5,11 L11.5,12.5"/></g><g fill="#9ad4f7" stroke="#111" stroke-width="0.9"><circle cx="2.5" cy="2.5" r="2"/><circle cx="8" cy="4.5" r="1.6"/><circle cx="2.5" cy="9" r="1.6"/><circle cx="7.5" cy="11" r="1.6"/><circle cx="12.5" cy="12.5" r="2"/></g><g fill="#111"><circle cx="12.8" cy="1.5" r="1"/><circle cx="12.8" cy="5.5" r="1"/><circle cx="5.5" cy="7" r="1"/><circle cx="10" cy="8" r="1"/><circle cx="1" cy="14.5" r="1"/><circle cx="4.5" cy="14.5" r="1"/></g></svg><div class="a" style="left:389px;top:1000px;font-size:14px;line-height:16px;color:#3a7fc0;">PlaylistTrack (TrackId)</div><div class="a" style="left:648px;top:874px;width:15px;height:101px;background:#f0f0f0;"></div><svg class="a" style="left:651.5px;top:880px;" width="8" height="5" viewBox="0 0 8 5"><path d="M0,4.5 L4,0 L8,4.5 Z" fill="#a3a3a3"/></svg><svg class="a" style="left:651.5px;top:963px;" width="8" height="5" viewBox="0 0 8 5"><path d="M0,0 L8,0 L4,4.5 Z" fill="#5e5e5e"/></svg><div class="a" style="left:650px;top:889px;width:11px;height:49px;background:#c1c1c1;"></div><div class="a" style="left:0px;top:975px;width:1528px;height:20px;background:#1c05c9;"></div><svg class="a" style="left:10px;top:978px;overflow:visible" width="12" height="14" viewBox="0 0 448 512"><path fill="#ffffff" d="M448 73.143v45.714C448 159.143 347.667 192 224 192S0 159.143 0 118.857V73.143C0 32.857 100.333 0 224 0s224 32.857 224 73.143zM448 176v102.857C448 319.143 347.667 352 224 352S0 319.143 0 278.857V176c48.125 33.143 136.208 48.572 224 48.572S399.874 209.143 448 176zm0 160v102.857C448 479.143 347.667 512 224 512S0 479.143 0 438.857V336c48.125 33.143 136.208 48.572 224 48.572S399.874 369.143 448 336z"/></svg><div class="a" style="left:25px;top:977px;font-size:14px;line-height:16px;color:#fff;">Chinook</div><svg class="a" style="left:98px;top:977px;" width="13" height="13" viewBox="0 0 16 16"><circle cx="8" cy="8" r="7.6" fill="#f4f4f4" stroke="#ddd" stroke-width="0.5"/><text x="2.2" y="10.5" font-size="5" font-family="Liberation Sans" fill="#e48e00">My</text><text x="8.2" y="10.5" font-size="5" font-family="Liberation Sans" fill="#5d87a1">SQL</text><path d="M9,2.5 Q11,3 12,6" stroke="#5d87a1" stroke-width="0.6" fill="none"/></svg><div class="a" style="left:113px;top:977px;font-size:14px;line-height:16px;color:#fff;letter-spacing:-0.3px;">MySQL Local</div><svg class="a" style="left:214px;top:978px;" width="12" height="14" viewBox="0 0 12 14"><circle cx="6" cy="3.6" r="3.4" fill="#fff"/><path d="M0,14 V11.5 Q0,7.8 3.5,7.8 H8.5 Q12,7.8 12,11.5 V14 Z" fill="#fff"/></svg><div class="a" style="left:229px;top:977px;font-size:14px;line-height:16px;color:#fff;">root</div><svg class="a" style="left:277px;top:978px;" width="14" height="14" viewBox="0 0 14 14"><circle cx="7" cy="7" r="6.8" fill="#ee1f2f"/><path d="M4.3,4.3 L9.7,9.7 M9.7,4.3 L4.3,9.7" stroke="#1c05c9" stroke-width="2"/></svg><div class="a" style="left:294px;top:977px;font-size:14px;line-height:16px;color:#fff;">Error</div></body></html>
